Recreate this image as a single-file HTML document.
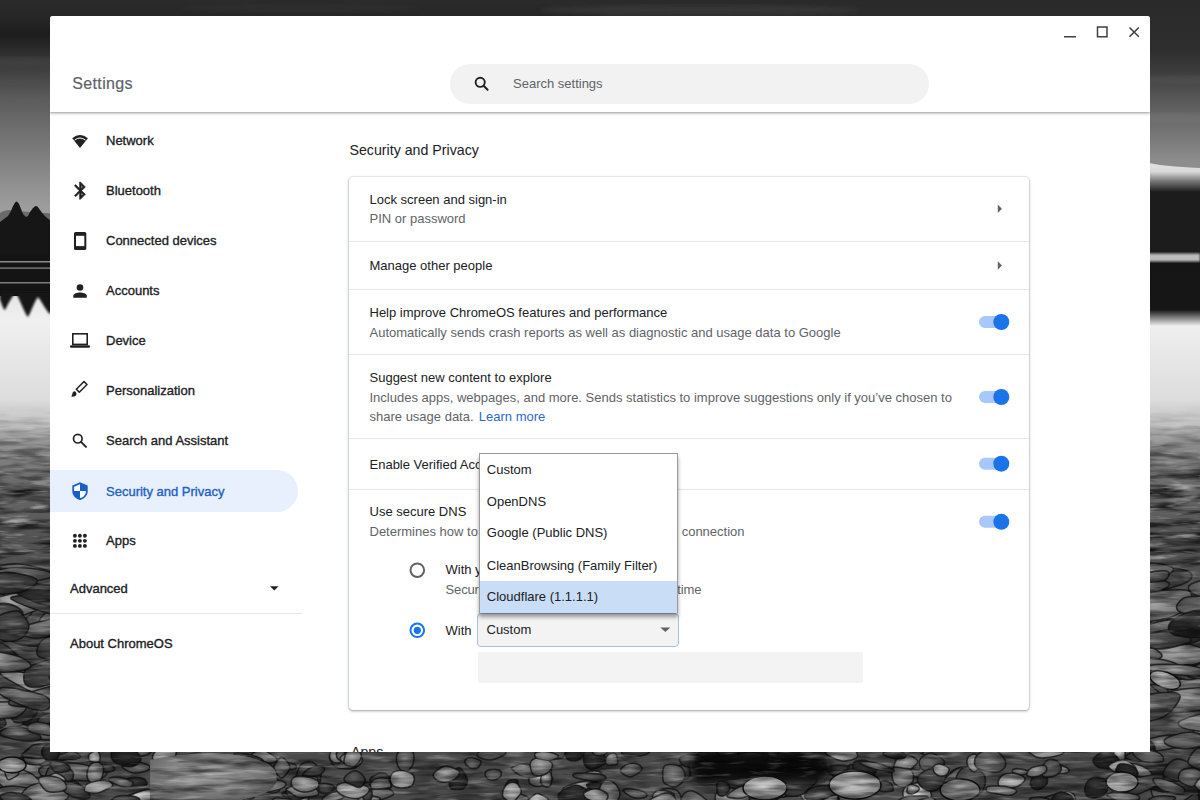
<!DOCTYPE html>
<html><head><meta charset="utf-8">
<style>
*{box-sizing:border-box;margin:0;padding:0}
html,body{width:1200px;height:800px;overflow:hidden;font-family:"Liberation Sans",sans-serif;}
body{position:relative;background:#4a4a4a;}
#bg{position:absolute;left:0;top:0;width:1200px;height:800px}
.win{position:absolute;left:50px;top:16px;width:1100px;height:736px;background:#fff;border-radius:3px 3px 0 0;overflow:hidden}
.pg{position:absolute;left:-50px;top:-16px;width:1200px;height:800px}
.hdr{position:absolute;left:50px;top:16px;width:1100px;height:96px;background:#fff;box-shadow:0 1px 2px rgba(0,0,0,.28),0 2px 3px rgba(0,0,0,.12);z-index:3}
.t{position:absolute;white-space:nowrap;font-size:13px;color:#202124;line-height:16px}
.s{color:#5f6368}
.nav{-webkit-text-stroke:0.35px #202124}
svg.i{position:absolute;left:0;top:0;overflow:visible}
.card{position:absolute;left:349px;top:177px;width:680px;height:533px;border-radius:4px;box-shadow:0 0 0 1px rgba(0,0,0,.06),0 1px 2px rgba(60,64,67,.3),0 1px 3px 1px rgba(60,64,67,.12);background:#fff}
.dv{position:absolute;left:349px;width:680px;height:1px;background:#e6e6e6}
</style></head>
<body>
<svg id="bg" width="1200" height="800" viewBox="0 0 1200 800">
<defs>
<linearGradient id="skyL" x1="0" y1="0" x2="0" y2="216" gradientUnits="userSpaceOnUse">
<stop offset="0" stop-color="#2b2b2b"/><stop offset="0.08" stop-color="#262626"/><stop offset="0.16" stop-color="#1d1d1d"/><stop offset="0.3" stop-color="#3a3a3a"/><stop offset="0.46" stop-color="#5c5c5c"/><stop offset="0.69" stop-color="#7a7a7a"/><stop offset="0.93" stop-color="#9a9a9a"/><stop offset="1" stop-color="#a0a0a0"/>
</linearGradient>
<linearGradient id="skyR" x1="0" y1="0" x2="0" y2="216" gradientUnits="userSpaceOnUse">
<stop offset="0" stop-color="#2a2a2a"/><stop offset="0.23" stop-color="#2e2e2e"/><stop offset="0.33" stop-color="#3c3c3c"/><stop offset="0.47" stop-color="#5a5a5a"/><stop offset="0.74" stop-color="#8c8c8c"/><stop offset="1" stop-color="#989898"/>
</linearGradient>
<linearGradient id="snow" x1="0" y1="163" x2="0" y2="192" gradientUnits="userSpaceOnUse">
<stop offset="0" stop-color="#e2e2e2"/><stop offset="0.3" stop-color="#d8d8d8"/><stop offset="0.65" stop-color="#707070"/><stop offset="1" stop-color="#1c1c1c"/>
</linearGradient>
<linearGradient id="water" x1="0" y1="296" x2="0" y2="800" gradientUnits="userSpaceOnUse">
<stop offset="0" stop-color="#e6e6e6"/><stop offset="0.05" stop-color="#f0f0f0"/><stop offset="0.206" stop-color="#dcdcdc"/><stop offset="0.256" stop-color="#c0c0c0"/><stop offset="0.296" stop-color="#8c8c8c"/><stop offset="0.365" stop-color="#6c6c6c"/><stop offset="0.484" stop-color="#525252"/><stop offset="1" stop-color="#4a4a4a"/>
</linearGradient>
<linearGradient id="reflR" x1="0" y1="261" x2="0" y2="326" gradientUnits="userSpaceOnUse">
<stop offset="0" stop-color="#151515"/><stop offset="0.75" stop-color="#171717"/><stop offset="1" stop-color="#171717" stop-opacity="0"/>
</linearGradient>
<linearGradient id="mk" x1="0" y1="405" x2="0" y2="490" gradientUnits="userSpaceOnUse">
<stop offset="0" stop-color="#fff" stop-opacity="0"/><stop offset="1" stop-color="#fff" stop-opacity="1"/>
</linearGradient>
<mask id="texmask"><rect x="0" y="380" width="1200" height="420" fill="url(#mk)"/></mask>
<radialGradient id="g1" cx="0.45" cy="0.4" r="0.65"><stop offset="0" stop-color="#a8a8a8"/><stop offset="1" stop-color="#5a5a5a"/></radialGradient>
<radialGradient id="g2" cx="0.45" cy="0.4" r="0.65"><stop offset="0" stop-color="#808080"/><stop offset="1" stop-color="#404040"/></radialGradient>
<radialGradient id="g3" cx="0.45" cy="0.4" r="0.65"><stop offset="0" stop-color="#5e5e5e"/><stop offset="1" stop-color="#2a2a2a"/></radialGradient>
<radialGradient id="g4" cx="0.45" cy="0.4" r="0.65"><stop offset="0" stop-color="#3a3a3a"/><stop offset="1" stop-color="#181818"/></radialGradient>
<radialGradient id="g5" cx="0.45" cy="0.4" r="0.65"><stop offset="0" stop-color="#d0d0d0"/><stop offset="1" stop-color="#7a7a7a"/></radialGradient>
<filter id="tex" x="0" y="0" width="100%" height="100%" color-interpolation-filters="sRGB">
<feTurbulence type="fractalNoise" baseFrequency="0.022 0.15" numOctaves="3" seed="4"/>
<feColorMatrix type="matrix" values="0 0 0 0 0  0 0 0 0 0  0 0 0 0 0  2.4 0 0 0 -0.95"/>
</filter>
<filter id="tex2" x="0" y="0" width="100%" height="100%" color-interpolation-filters="sRGB">
<feTurbulence type="fractalNoise" baseFrequency="0.03 0.2" numOctaves="3" seed="9"/>
<feColorMatrix type="matrix" values="0 0 0 0 1  0 0 0 0 1  0 0 0 0 1  2.6 0 0 0 -1.4"/>
</filter>
<filter id="b1"><feGaussianBlur stdDeviation="1"/></filter>
<filter id="b2"><feGaussianBlur stdDeviation="2"/></filter>
<filter id="b4" x="-50%" y="-50%" width="200%" height="200%"><feGaussianBlur stdDeviation="5"/></filter>
</defs>
<rect x="0" y="0" width="600" height="216" fill="url(#skyL)"/>
<rect x="600" y="0" width="600" height="216" fill="url(#skyR)"/>
<ellipse cx="20" cy="62" rx="60" ry="5" fill="#444" opacity="0.6" filter="url(#b2)"/>
<ellipse cx="10" cy="84" rx="40" ry="4" fill="#505050" opacity="0.5" filter="url(#b2)"/>
<ellipse cx="30" cy="104" rx="60" ry="4" fill="#5e5e5e" opacity="0.4" filter="url(#b2)"/>
<ellipse cx="1185" cy="80" rx="50" ry="4" fill="#555" opacity="0.5" filter="url(#b2)"/>
<ellipse cx="1175" cy="118" rx="60" ry="5" fill="#7a7a7a" opacity="0.4" filter="url(#b2)"/>
<ellipse cx="700" cy="10" rx="160" ry="5" fill="#3a3a3a" opacity="0.7" filter="url(#b2)"/>
<ellipse cx="300" cy="8" rx="120" ry="4" fill="#323232" opacity="0.6" filter="url(#b2)"/>
<path d="M0,213 C4,210 10,209 16,211 L60,214 L60,262 L0,262 Z" fill="#6a6a6a"/>
<path d="M0,262 L0,222 L4,219 L8,216 L11,211 L13,206 L15.5,202 L17,201.5 L19,204 L21,209 L23,214 L26,217 L28,216 L30,212 L33,208 L35.5,206 L37.5,206.5 L40,210 L43,214 L47,218 L50,220 L60,224 L60,262 Z" fill="#161616"/>
<path d="M1140,160 L1150,163.3 L1160,165 L1175,166.5 L1190,167.5 L1200,168 L1200,254 L1140,254 Z" fill="url(#snow)"/>
<rect x="0" y="254" width="1200" height="546" fill="url(#water)"/>
<rect x="0" y="254" width="70" height="42" fill="#141414"/>
<path d="M0,292 L0,300 C2,304 3,309 5,310 C8,304 12,296 16,293 C20,300 25,314 28,317 C31,312 35,300 38,297 C42,302 47,312 50,314 C54,308 58,300 60,296 L60,292 Z" fill="#141414" filter="url(#b1)"/>
<rect x="1130" y="254" width="70" height="72" fill="url(#reflR)"/>
<rect x="1140" y="253.5" width="60" height="8" fill="#bcbcbc" filter="url(#b1)"/>
<rect x="0" y="261.2" width="60" height="1.2" fill="#a8a8a8"/>
<rect x="0" y="267.5" width="60" height="1.2" fill="#8a8a8a"/>
<rect x="0" y="282.2" width="60" height="1.2" fill="#9a9a9a"/>
<path d="M53.5,702.0C52.1,704.1 43.4,705.6 36.2,706.3C29.1,706.9 20.1,706.9 10.6,705.9C1.1,705.0 -16.4,702.9 -20.7,700.7C-25.1,698.4 -20.4,694.1 -15.5,692.3C-10.6,690.5 -1.5,689.5 8.5,689.8C18.6,690.0 37.3,691.6 44.8,693.7C52.3,695.7 55.0,699.9 53.5,702.0Z" fill="url(#g1)" stroke="#121212" stroke-opacity="0.75" stroke-width="1.6"/>
<path d="M51.5,762.0C51.5,763.6 48.2,765.2 45.2,766.0C42.2,766.7 37.2,766.6 33.3,766.3C29.4,766.0 23.8,765.6 21.8,764.2C19.7,762.7 18.9,759.1 21.1,757.7C23.3,756.4 31.1,756.2 35.1,755.9C39.1,755.7 42.3,755.2 45.1,756.2C47.8,757.2 51.5,760.3 51.5,762.0Z" fill="url(#g2)" stroke="#121212" stroke-opacity="0.75" stroke-width="1.6"/>
<path d="M54.5,573.3C55.7,574.2 49.9,575.1 43.2,576.6C36.4,578.2 21.6,581.6 14.1,582.5C6.6,583.3 1.4,582.2 -1.7,581.7C-4.7,581.2 -7.8,581.1 -4.1,579.6C-0.4,578.2 13.7,574.6 20.4,573.2C27.1,571.8 30.2,571.3 35.9,571.3C41.6,571.3 53.3,572.4 54.5,573.3Z" fill="url(#g1)" stroke="#121212" stroke-opacity="0.75" stroke-width="1.6"/>
<path d="M87.4,738.5C87.5,739.7 84.7,743.0 81.5,745.0C78.3,746.9 72.0,749.1 68.2,750.0C64.4,750.9 60.7,750.7 58.9,750.1C57.1,749.6 56.6,748.3 57.4,746.7C58.2,745.1 59.6,742.0 63.5,740.5C67.4,739.0 76.9,737.9 80.9,737.6C84.8,737.3 87.3,737.3 87.4,738.5Z" fill="url(#g2)" stroke="#121212" stroke-opacity="0.75" stroke-width="1.6"/>
<path d="M83.2,611.2C83.1,614.5 80.6,622.1 77.2,625.2C73.9,628.3 68.4,628.8 63.2,629.8C58.0,630.9 49.8,633.0 45.8,631.4C41.9,629.9 38.1,624.3 39.4,620.4C40.7,616.5 47.0,610.8 53.4,608.3C59.8,605.8 72.7,604.8 77.7,605.3C82.7,605.8 83.3,607.9 83.2,611.2Z" fill="url(#g1)" stroke="#121212" stroke-opacity="0.75" stroke-width="1.6"/>
<path d="M46.0,773.5C45.3,775.3 43.4,777.6 39.7,777.9C36.0,778.1 27.6,776.4 23.7,775.0C19.7,773.5 17.3,770.8 15.9,769.0C14.6,767.2 13.7,765.4 15.7,764.2C17.8,763.1 23.6,761.4 28.2,761.9C32.9,762.3 40.6,765.0 43.6,766.9C46.5,768.8 46.6,771.6 46.0,773.5Z" fill="url(#g1)" stroke="#121212" stroke-opacity="0.75" stroke-width="1.6"/>
<path d="M39.6,785.6C38.3,788.6 29.4,791.8 23.8,792.4C18.2,793.0 10.8,791.8 6.0,789.2C1.3,786.6 -2.5,780.8 -4.7,777.0C-6.9,773.2 -9.4,768.3 -7.2,766.5C-4.9,764.7 2.2,765.0 8.8,766.3C15.3,767.5 26.9,770.9 32.1,774.1C37.2,777.3 41.0,782.5 39.6,785.6Z" fill="url(#g1)" stroke="#121212" stroke-opacity="0.75" stroke-width="1.6"/>
<path d="M19.6,660.8C19.1,664.9 6.4,667.2 -0.8,668.0C-8.0,668.8 -15.8,667.3 -23.5,665.7C-31.2,664.0 -43.5,661.3 -47.0,658.1C-50.6,654.8 -48.5,649.1 -44.7,646.1C-40.8,643.1 -31.6,640.7 -23.7,640.2C-15.9,639.7 -4.9,639.8 2.3,643.3C9.5,646.7 20.2,656.7 19.6,660.8Z" fill="url(#g3)" stroke="#121212" stroke-opacity="0.75" stroke-width="1.6"/>
<path d="M46.2,592.2C45.6,595.0 33.4,596.0 25.4,595.1C17.4,594.2 6.9,590.8 -1.8,586.8C-10.5,582.9 -23.7,574.7 -26.6,571.3C-29.6,567.9 -24.8,566.8 -19.6,566.5C-14.4,566.2 -3.6,567.3 4.5,569.3C12.7,571.3 22.1,574.7 29.1,578.5C36.0,582.3 46.8,589.5 46.2,592.2Z" fill="url(#g2)" stroke="#121212" stroke-opacity="0.75" stroke-width="1.6"/>
<path d="M106.7,774.0C106.1,776.2 99.8,779.8 93.7,780.8C87.5,781.8 78.1,780.5 69.8,779.9C61.6,779.3 49.0,779.2 44.2,777.1C39.3,775.0 36.6,769.9 40.9,767.5C45.2,765.1 60.4,762.9 69.7,763.0C79.1,763.0 90.9,765.8 97.1,767.7C103.2,769.5 107.2,771.9 106.7,774.0Z" fill="url(#g2)" stroke="#121212" stroke-opacity="0.75" stroke-width="1.6"/>
<path d="M8.3,719.5C6.7,721.9 1.2,721.9 -4.2,721.9C-9.5,722.0 -17.2,722.5 -23.8,719.7C-30.4,716.9 -41.5,708.6 -43.8,705.2C-46.2,701.8 -42.1,700.0 -38.0,699.2C-33.8,698.4 -26.2,699.1 -19.0,700.5C-11.7,701.9 1.0,704.4 5.6,707.6C10.1,710.8 9.9,717.1 8.3,719.5Z" fill="url(#g2)" stroke="#121212" stroke-opacity="0.75" stroke-width="1.6"/>
<path d="M100.3,733.3C100.6,734.7 92.9,736.1 84.1,737.2C75.3,738.3 58.0,740.1 47.7,740.1C37.3,740.0 26.6,738.0 22.0,736.8C17.5,735.5 16.0,733.9 20.2,732.5C24.4,731.1 36.6,728.8 47.0,728.2C57.3,727.6 73.4,727.9 82.3,728.8C91.2,729.6 100.0,731.9 100.3,733.3Z" fill="url(#g2)" stroke="#121212" stroke-opacity="0.75" stroke-width="1.6"/>
<path d="M30.6,713.3C32.7,715.1 34.6,718.3 30.1,721.2C25.6,724.0 11.9,729.0 3.6,730.4C-4.7,731.8 -16.4,731.5 -19.9,729.5C-23.5,727.5 -20.2,721.3 -17.6,718.5C-14.9,715.6 -9.7,713.8 -3.9,712.4C1.9,711.0 11.6,709.9 17.3,710.0C23.1,710.2 28.5,711.4 30.6,713.3Z" fill="url(#g2)" stroke="#121212" stroke-opacity="0.75" stroke-width="1.6"/>
<path d="M41.1,737.2C41.9,739.2 38.3,741.1 33.8,741.4C29.2,741.7 19.4,740.2 13.9,739.2C8.4,738.1 2.4,736.8 0.7,735.2C-1.1,733.5 1.3,730.9 3.4,729.5C5.6,728.0 9.3,726.3 13.5,726.3C17.7,726.3 24.3,727.7 28.9,729.5C33.5,731.4 40.3,735.3 41.1,737.2Z" fill="url(#g3)" stroke="#121212" stroke-opacity="0.75" stroke-width="1.6"/>
<path d="M74.1,698.8C73.2,700.4 63.6,699.7 56.6,698.5C49.5,697.3 41.1,695.7 31.8,691.8C22.6,687.8 5.3,678.2 1.3,674.8C-2.7,671.4 3.0,671.2 7.8,671.2C12.6,671.1 21.2,671.6 30.3,674.5C39.4,677.5 54.9,685.0 62.2,689.1C69.5,693.1 75.0,697.2 74.1,698.8Z" fill="url(#g1)" stroke="#121212" stroke-opacity="0.75" stroke-width="1.6"/>
<path d="M0.3,663.7C1.2,666.8 3.5,671.2 -1.2,674.6C-5.8,678.1 -19.8,683.0 -27.8,684.6C-35.8,686.2 -45.8,685.9 -49.2,684.3C-52.5,682.7 -50.7,678.6 -47.9,674.9C-45.2,671.2 -39.6,665.1 -32.6,662.1C-25.7,659.0 -11.7,656.2 -6.3,656.5C-0.8,656.8 -0.5,660.7 0.3,663.7Z" fill="url(#g1)" stroke="#121212" stroke-opacity="0.75" stroke-width="1.6"/>
<path d="M77.3,666.2C78.1,669.2 75.1,671.9 69.2,675.3C63.3,678.7 49.0,685.0 41.7,686.6C34.4,688.1 28.3,687.4 25.6,684.5C23.0,681.5 23.1,672.9 25.9,669.1C28.7,665.3 36.0,663.5 42.4,661.6C48.8,659.7 58.7,656.9 64.5,657.7C70.3,658.4 76.5,663.3 77.3,666.2Z" fill="url(#g3)" stroke="#121212" stroke-opacity="0.75" stroke-width="1.6"/>
<path d="M65.0,581.9C64.4,584.1 70.0,589.4 62.9,589.8C55.9,590.2 33.3,587.2 22.7,584.2C12.1,581.2 3.0,574.9 -0.9,571.8C-4.7,568.8 -4.6,567.3 -0.6,566.1C3.5,564.8 12.3,562.6 23.5,564.4C34.7,566.2 60.0,573.7 66.9,576.7C73.8,579.6 65.7,579.8 65.0,581.9Z" fill="url(#g3)" stroke="#121212" stroke-opacity="0.75" stroke-width="1.6"/>
<path d="M46.0,597.2C45.5,598.2 46.4,599.9 41.7,600.0C37.0,600.1 24.3,598.9 17.8,597.8C11.4,596.8 5.9,595.2 3.1,593.8C0.4,592.4 -1.6,590.0 1.4,589.3C4.4,588.6 14.1,588.9 21.3,589.7C28.4,590.5 40.3,592.7 44.4,594.0C48.5,595.3 46.4,596.2 46.0,597.2Z" fill="url(#g1)" stroke="#121212" stroke-opacity="0.75" stroke-width="1.6"/>
<path d="M5.8,724.9C4.4,727.9 -4.6,729.7 -12.3,729.1C-20.1,728.5 -32.1,724.4 -40.5,721.2C-49.0,718.1 -61.4,713.4 -63.2,710.4C-65.0,707.5 -56.1,705.1 -51.6,703.6C-47.1,702.2 -43.9,700.4 -35.9,701.6C-28.0,702.9 -11.1,707.1 -4.1,711.0C2.8,714.9 7.2,721.8 5.8,724.9Z" fill="url(#g3)" stroke="#121212" stroke-opacity="0.75" stroke-width="1.6"/>
<path d="M83.8,595.0C84.8,597.6 83.4,601.0 79.4,603.4C75.4,605.9 65.1,608.9 59.8,609.8C54.5,610.8 49.9,610.7 47.6,609.2C45.4,607.6 44.9,603.3 46.6,600.4C48.2,597.6 53.1,594.1 57.6,592.1C62.1,590.0 69.2,587.7 73.6,588.2C77.9,588.7 82.8,592.5 83.8,595.0Z" fill="url(#g2)" stroke="#121212" stroke-opacity="0.75" stroke-width="1.6"/>
<path d="M80.4,756.4C80.6,757.8 78.2,758.9 73.9,759.5C69.7,760.0 61.8,760.6 55.0,759.8C48.1,759.1 36.6,756.4 32.6,754.9C28.7,753.4 28.6,751.6 31.4,750.7C34.2,749.8 42.5,749.3 49.4,749.4C56.2,749.5 67.4,750.1 72.6,751.3C77.8,752.4 80.2,755.1 80.4,756.4Z" fill="url(#g3)" stroke="#121212" stroke-opacity="0.75" stroke-width="1.6"/>
<path d="M31.8,612.9C32.1,614.8 25.7,618.3 21.5,620.6C17.3,622.8 12.4,625.0 6.8,626.2C1.1,627.4 -8.9,629.1 -12.4,627.8C-15.9,626.5 -16.9,621.2 -14.2,618.4C-11.5,615.5 -2.0,612.5 3.7,610.9C9.4,609.4 15.2,608.8 19.9,609.1C24.6,609.5 31.6,611.0 31.8,612.9Z" fill="url(#g2)" stroke="#121212" stroke-opacity="0.75" stroke-width="1.6"/>
<path d="M54.7,802.6C54.9,805.3 47.5,807.6 40.1,807.7C32.8,807.8 18.5,805.5 10.5,803.1C2.5,800.8 -6.0,796.1 -7.9,793.6C-9.7,791.1 -4.4,789.3 -0.6,788.1C3.2,786.9 8.4,785.7 15.0,786.3C21.6,786.8 32.1,788.6 38.7,791.3C45.3,794.0 54.5,799.8 54.7,802.6Z" fill="url(#g1)" stroke="#121212" stroke-opacity="0.75" stroke-width="1.6"/>
<path d="M54.4,711.1C55.2,714.5 56.2,718.7 52.9,721.3C49.5,723.8 39.6,726.0 34.6,726.3C29.5,726.5 24.6,725.7 22.4,722.9C20.2,720.2 20.3,713.1 21.4,709.7C22.6,706.2 24.7,703.9 29.1,702.5C33.5,701.0 43.5,699.5 47.7,701.0C51.9,702.4 53.5,707.7 54.4,711.1Z" fill="url(#g4)" stroke="#121212" stroke-opacity="0.75" stroke-width="1.6"/>
<path d="M66.5,717.2C67.1,718.8 64.0,722.2 60.7,723.7C57.3,725.2 50.0,726.0 46.3,726.1C42.6,726.2 39.5,725.5 38.4,724.1C37.2,722.6 37.8,719.2 39.5,717.5C41.2,715.7 45.7,714.3 48.7,713.7C51.6,713.1 54.2,713.3 57.2,713.9C60.1,714.5 66.0,715.6 66.5,717.2Z" fill="url(#g3)" stroke="#121212" stroke-opacity="0.75" stroke-width="1.6"/>
<path d="M37.6,709.9C37.6,712.7 34.5,717.5 30.8,719.6C27.1,721.7 19.0,723.5 15.5,722.5C12.0,721.6 11.0,717.0 9.9,713.9C8.8,710.7 7.0,706.1 8.6,703.6C10.3,701.1 16.0,698.8 19.7,698.7C23.4,698.7 28.0,701.3 31.0,703.1C34.0,705.0 37.7,707.2 37.6,709.9Z" fill="url(#g3)" stroke="#121212" stroke-opacity="0.75" stroke-width="1.6"/>
<path d="M30.6,667.0C29.1,669.3 19.4,671.1 13.2,671.8C6.9,672.4 -0.6,672.9 -6.6,670.9C-12.7,668.8 -21.0,663.0 -23.3,659.5C-25.6,656.0 -24.3,651.0 -20.3,649.8C-16.3,648.6 -6.7,651.0 0.5,652.3C7.6,653.7 17.6,655.7 22.7,658.1C27.7,660.6 32.2,664.7 30.6,667.0Z" fill="url(#g1)" stroke="#121212" stroke-opacity="0.75" stroke-width="1.6"/>
<path d="M19.5,585.5C18.6,587.0 11.7,587.9 5.3,588.1C-1.1,588.4 -13.0,587.8 -18.8,586.9C-24.6,585.9 -27.0,584.1 -29.5,582.5C-32.0,580.9 -36.5,578.4 -33.9,577.3C-31.2,576.2 -21.0,575.8 -13.5,576.1C-6.1,576.5 5.3,577.6 10.9,579.2C16.4,580.8 20.4,584.0 19.5,585.5Z" fill="url(#g2)" stroke="#121212" stroke-opacity="0.75" stroke-width="1.6"/>
<path d="M27.1,704.8C28.2,707.3 23.1,714.4 17.0,716.7C10.9,719.0 -2.9,718.3 -9.7,718.6C-16.5,719.0 -20.2,719.9 -23.8,718.7C-27.5,717.4 -33.3,713.7 -31.8,711.2C-30.2,708.7 -21.5,705.4 -14.4,703.8C-7.3,702.2 3.8,701.5 10.7,701.6C17.6,701.8 26.1,702.3 27.1,704.8Z" fill="url(#g1)" stroke="#121212" stroke-opacity="0.75" stroke-width="1.6"/>
<path d="M66.1,691.5C66.6,694.0 63.6,698.3 58.6,700.8C53.6,703.3 44.1,705.7 36.2,706.5C28.4,707.3 15.5,706.7 11.4,705.5C7.3,704.2 8.0,701.3 11.6,699.0C15.2,696.7 25.6,693.7 32.9,691.4C40.3,689.2 50.5,685.7 56.0,685.7C61.5,685.7 65.7,689.0 66.1,691.5Z" fill="url(#g2)" stroke="#121212" stroke-opacity="0.75" stroke-width="1.6"/>
<path d="M69.2,639.1C70.0,641.4 60.3,643.6 52.7,644.7C45.1,645.7 31.7,646.7 23.6,645.4C15.6,644.2 6.5,639.8 4.2,637.2C1.9,634.6 6.8,631.9 9.8,630.0C12.8,628.1 15.9,625.8 22.3,625.9C28.7,626.0 40.3,628.4 48.1,630.5C56.0,632.7 68.5,636.7 69.2,639.1Z" fill="url(#g3)" stroke="#121212" stroke-opacity="0.75" stroke-width="1.6"/>
<path d="M65.1,733.5C64.8,734.9 63.9,736.2 59.2,736.2C54.5,736.2 42.2,734.9 36.9,733.8C31.7,732.7 28.8,731.3 27.7,729.6C26.6,727.9 28.4,725.0 30.3,723.7C32.2,722.5 34.0,721.5 39.1,722.2C44.3,722.9 56.9,726.0 61.2,727.9C65.5,729.8 65.5,732.1 65.1,733.5Z" fill="url(#g2)" stroke="#121212" stroke-opacity="0.75" stroke-width="1.6"/>
<path d="M-5.4,764.2C-6.2,767.4 -9.9,771.5 -13.4,772.3C-16.9,773.2 -22.2,771.1 -26.2,769.3C-30.2,767.5 -36.5,763.9 -37.3,761.5C-38.2,759.2 -34.1,757.1 -31.6,755.0C-29.0,753.0 -25.9,749.4 -22.0,749.1C-18.2,748.7 -11.1,750.6 -8.3,753.1C-5.6,755.6 -4.5,761.0 -5.4,764.2Z" fill="url(#g4)" stroke="#121212" stroke-opacity="0.75" stroke-width="1.6"/>
<path d="M50.9,750.3C51.6,752.8 51.0,756.5 48.7,758.9C46.5,761.3 41.2,764.2 37.4,764.8C33.5,765.4 27.8,764.3 25.6,762.4C23.3,760.5 22.4,756.3 23.9,753.4C25.4,750.6 31.1,746.8 34.5,745.3C38.0,743.8 41.9,743.6 44.6,744.5C47.4,745.3 50.2,747.9 50.9,750.3Z" fill="url(#g1)" stroke="#121212" stroke-opacity="0.75" stroke-width="1.6"/>
<path d="M71.1,643.3C71.6,646.1 70.0,650.3 66.7,653.0C63.4,655.6 56.2,658.6 51.4,659.1C46.6,659.6 40.0,658.1 37.8,655.7C35.7,653.3 37.1,647.7 38.7,644.6C40.4,641.5 43.4,638.5 47.7,637.1C51.9,635.7 60.3,635.1 64.2,636.1C68.1,637.2 70.7,640.5 71.1,643.3Z" fill="url(#g3)" stroke="#121212" stroke-opacity="0.75" stroke-width="1.6"/>
<path d="M45.7,595.6C47.0,598.9 47.2,604.0 41.2,607.7C35.3,611.5 18.2,617.0 10.0,618.1C1.7,619.2 -3.8,617.2 -8.4,614.6C-12.9,612.0 -20.0,605.9 -17.1,602.6C-14.3,599.2 0.2,596.9 8.6,594.5C17.0,592.1 27.0,587.8 33.1,588.0C39.3,588.2 44.4,592.3 45.7,595.6Z" fill="url(#g1)" stroke="#121212" stroke-opacity="0.75" stroke-width="1.6"/>
<path d="M23.0,614.0C23.1,616.6 21.3,620.1 16.9,621.9C12.4,623.7 2.3,625.0 -3.9,624.8C-10.0,624.6 -18.2,622.9 -20.2,620.8C-22.3,618.6 -19.7,614.6 -16.2,611.8C-12.7,608.9 -4.6,604.4 0.8,603.5C6.1,602.6 12.3,604.7 16.0,606.5C19.7,608.2 22.8,611.5 23.0,614.0Z" fill="url(#g3)" stroke="#121212" stroke-opacity="0.75" stroke-width="1.6"/>
<path d="M90.9,686.8C90.1,688.4 84.3,689.2 80.4,689.4C76.6,689.7 73.0,690.0 67.9,688.2C62.7,686.4 51.3,681.1 49.4,678.7C47.4,676.3 53.2,674.9 55.9,674.1C58.7,673.3 61.0,672.8 65.8,673.8C70.7,674.7 80.8,677.5 84.9,679.6C89.1,681.8 91.6,685.1 90.9,686.8Z" fill="url(#g2)" stroke="#121212" stroke-opacity="0.75" stroke-width="1.6"/>
<path d="M87.3,608.6C88.0,611.1 84.9,614.3 78.4,615.1C71.9,615.9 59.3,615.9 48.3,613.4C37.3,610.9 17.2,602.9 12.4,599.9C7.7,597.0 13.9,596.4 19.9,595.6C25.8,594.7 39.1,594.0 48.2,594.8C57.2,595.5 67.6,597.5 74.1,599.8C80.7,602.1 86.6,606.0 87.3,608.6Z" fill="url(#g3)" stroke="#121212" stroke-opacity="0.75" stroke-width="1.6"/>
<path d="M108.9,701.1C109.4,703.1 103.5,707.7 96.0,709.6C88.4,711.6 73.0,712.8 63.6,712.7C54.2,712.7 42.9,710.7 39.4,709.2C35.9,707.8 39.1,705.8 42.5,703.9C45.9,701.9 51.1,698.4 59.5,697.4C67.9,696.3 84.7,697.0 92.9,697.6C101.1,698.3 108.4,699.1 108.9,701.1Z" fill="url(#g4)" stroke="#121212" stroke-opacity="0.75" stroke-width="1.6"/>
<path d="M68.3,600.2C66.8,603.0 58.0,605.8 52.8,606.2C47.6,606.7 43.2,605.2 37.2,602.9C31.1,600.6 19.0,596.0 16.6,592.6C14.3,589.3 18.5,584.3 22.9,583.0C27.3,581.6 36.5,583.6 43.1,584.6C49.6,585.6 57.8,586.5 62.1,589.1C66.3,591.7 69.9,597.3 68.3,600.2Z" fill="url(#g4)" stroke="#121212" stroke-opacity="0.75" stroke-width="1.6"/>
<path d="M78.6,783.5C79.0,785.6 71.9,790.1 65.6,792.5C59.3,794.9 48.0,797.2 40.9,797.9C33.9,798.7 26.4,797.8 23.3,797.1C20.3,796.3 19.3,795.7 22.4,793.3C25.5,791.0 35.0,785.2 41.8,782.9C48.6,780.7 57.2,779.9 63.3,780.0C69.5,780.1 78.2,781.4 78.6,783.5Z" fill="url(#g2)" stroke="#121212" stroke-opacity="0.75" stroke-width="1.6"/>
<path d="M72.7,702.9C73.1,704.4 71.1,707.6 68.7,709.1C66.2,710.5 62.0,710.7 58.0,711.4C54.0,712.1 47.6,713.8 44.8,713.2C41.9,712.7 39.4,710.1 40.8,708.1C42.3,706.1 49.1,702.8 53.4,701.5C57.7,700.1 63.3,699.8 66.5,700.0C69.8,700.2 72.4,701.4 72.7,702.9Z" fill="url(#g2)" stroke="#121212" stroke-opacity="0.75" stroke-width="1.6"/>
<path d="M84.9,619.7C86.1,621.4 86.3,623.9 78.9,626.9C71.6,629.9 50.0,636.3 40.8,637.8C31.5,639.3 27.5,637.1 23.3,635.8C19.1,634.4 12.0,632.1 15.4,629.6C18.9,627.1 34.6,622.8 44.0,620.6C53.4,618.4 65.1,616.6 71.9,616.5C78.7,616.3 83.8,618.0 84.9,619.7Z" fill="url(#g2)" stroke="#121212" stroke-opacity="0.75" stroke-width="1.6"/>
<path d="M68.3,792.5C69.5,795.8 68.8,797.7 64.2,800.9C59.6,804.1 48.0,810.2 40.7,811.7C33.4,813.2 23.7,812.3 20.3,809.9C16.8,807.5 18.3,801.3 20.1,797.2C21.8,793.2 24.5,788.2 30.7,785.5C36.9,782.8 51.0,779.9 57.3,781.1C63.5,782.3 67.1,789.2 68.3,792.5Z" fill="url(#g1)" stroke="#121212" stroke-opacity="0.75" stroke-width="1.6"/>
<path d="M49.6,707.3C48.1,709.6 42.9,710.7 37.2,710.0C31.6,709.2 22.1,705.5 15.7,702.7C9.3,699.9 1.1,695.7 -1.0,693.2C-3.2,690.6 -0.9,687.9 2.8,687.3C6.4,686.7 13.8,688.1 21.0,689.6C28.2,691.2 41.2,693.4 46.0,696.4C50.7,699.3 51.0,705.1 49.6,707.3Z" fill="url(#g2)" stroke="#121212" stroke-opacity="0.75" stroke-width="1.6"/>
<path d="M92.2,720.2C93.1,723.4 88.3,725.9 84.4,728.2C80.5,730.4 74.2,733.4 68.8,733.6C63.4,733.8 55.0,731.8 52.0,729.4C49.1,727.0 49.7,722.4 51.0,719.0C52.3,715.6 54.9,710.7 59.6,709.0C64.2,707.3 73.5,707.0 78.9,708.9C84.4,710.8 91.3,717.0 92.2,720.2Z" fill="url(#g3)" stroke="#121212" stroke-opacity="0.75" stroke-width="1.6"/>
<path d="M69.9,749.7C70.2,751.5 66.0,753.0 60.6,754.5C55.3,756.0 44.3,758.3 37.8,758.5C31.3,758.8 23.2,757.4 21.6,755.9C20.0,754.4 26.0,751.5 28.2,749.7C30.4,747.8 29.7,745.6 34.8,744.6C39.9,743.7 52.9,743.0 58.8,743.8C64.6,744.7 69.6,747.9 69.9,749.7Z" fill="url(#g3)" stroke="#121212" stroke-opacity="0.75" stroke-width="1.6"/>
<path d="M53.7,574.1C55.0,576.0 46.8,578.9 40.0,580.3C33.2,581.7 22.5,582.4 12.8,582.4C3.1,582.5 -13.6,582.0 -18.1,580.6C-22.5,579.3 -18.4,576.4 -13.9,574.3C-9.5,572.1 0.8,568.9 8.4,568.0C16.1,567.0 24.5,567.5 32.0,568.5C39.6,569.6 52.4,572.1 53.7,574.1Z" fill="url(#g2)" stroke="#121212" stroke-opacity="0.75" stroke-width="1.6"/>
<path d="M28.9,625.7C29.1,629.9 26.1,635.3 22.1,637.9C18.1,640.5 9.4,642.2 5.0,641.3C0.7,640.4 -2.4,636.6 -3.8,632.6C-5.1,628.7 -5.8,621.3 -3.0,617.8C-0.3,614.2 8.5,612.0 12.5,611.2C16.5,610.4 18.1,610.4 20.8,612.8C23.5,615.2 28.7,621.5 28.9,625.7Z" fill="url(#g3)" stroke="#121212" stroke-opacity="0.75" stroke-width="1.6"/>
<path d="M37.2,580.0C38.3,582.7 32.4,587.8 26.2,590.2C20.1,592.7 10.1,594.1 0.3,594.4C-9.6,594.8 -28.8,594.4 -32.7,592.2C-36.5,590.0 -28.3,584.7 -22.9,581.5C-17.5,578.2 -7.2,574.2 -0.2,572.9C6.8,571.6 12.9,572.5 19.1,573.7C25.4,574.9 36.0,577.2 37.2,580.0Z" fill="url(#g3)" stroke="#121212" stroke-opacity="0.75" stroke-width="1.6"/>
<path d="M73.0,777.9C72.1,780.5 68.3,783.5 65.9,785.4C63.5,787.3 62.0,789.6 58.7,789.1C55.3,788.7 47.5,786.1 45.7,782.8C43.8,779.5 46.1,772.3 47.7,769.4C49.2,766.5 51.2,765.1 55.1,765.2C59.0,765.3 68.1,767.8 71.1,769.9C74.1,772.0 73.9,775.3 73.0,777.9Z" fill="url(#g3)" stroke="#121212" stroke-opacity="0.75" stroke-width="1.6"/>
<path d="M-2.2,616.9C-1.3,619.1 -0.3,622.6 -3.9,624.8C-7.6,626.9 -17.7,628.7 -24.2,629.7C-30.7,630.7 -40.7,632.4 -43.0,630.8C-45.3,629.3 -40.3,622.9 -38.0,620.3C-35.8,617.8 -34.2,616.9 -29.3,615.4C-24.5,614.0 -13.7,611.5 -9.2,611.7C-4.6,612.0 -3.1,614.8 -2.2,616.9Z" fill="url(#g1)" stroke="#121212" stroke-opacity="0.75" stroke-width="1.6"/>
<path d="M-4.5,781.0C-4.6,783.2 -7.7,786.0 -11.5,787.2C-15.2,788.5 -23.0,788.9 -27.1,788.5C-31.2,788.1 -34.1,786.8 -36.1,784.9C-38.1,782.9 -41.3,778.5 -38.9,776.6C-36.6,774.7 -26.6,773.8 -21.9,773.3C-17.3,772.9 -13.9,772.4 -11.0,773.7C-8.1,775.0 -4.4,778.7 -4.5,781.0Z" fill="url(#g3)" stroke="#121212" stroke-opacity="0.75" stroke-width="1.6"/>
<path d="M1191.4,785.9C1191.5,787.5 1189.4,789.0 1183.4,789.6C1177.3,790.1 1162.8,790.4 1155.2,789.2C1147.6,788.1 1139.9,784.6 1137.7,782.7C1135.4,780.9 1137.2,779.1 1141.5,778.2C1145.7,777.4 1156.5,777.6 1163.4,777.8C1170.2,778.1 1178.0,778.5 1182.7,779.9C1187.4,781.2 1191.3,784.3 1191.4,785.9Z" fill="url(#g2)" stroke="#121212" stroke-opacity="0.75" stroke-width="1.6"/>
<path d="M1211.4,630.2C1211.6,632.8 1213.7,636.2 1208.6,637.6C1203.5,638.9 1189.9,639.4 1180.8,638.2C1171.7,637.1 1158.6,633.1 1154.1,630.7C1149.6,628.2 1149.5,625.2 1153.7,623.3C1158.0,621.5 1170.6,619.6 1179.6,619.3C1188.5,619.1 1202.1,620.1 1207.4,621.9C1212.7,623.7 1211.2,627.6 1211.4,630.2Z" fill="url(#g3)" stroke="#121212" stroke-opacity="0.75" stroke-width="1.6"/>
<path d="M1145.3,597.5C1145.3,600.3 1144.0,603.4 1140.1,604.8C1136.1,606.2 1126.5,606.8 1121.7,605.9C1116.9,605.0 1113.3,602.1 1111.3,599.5C1109.2,596.8 1107.2,592.1 1109.3,589.9C1111.4,587.7 1118.8,586.6 1123.9,586.3C1129.0,586.0 1136.2,586.2 1139.7,588.1C1143.3,589.9 1145.2,594.7 1145.3,597.5Z" fill="url(#g3)" stroke="#121212" stroke-opacity="0.75" stroke-width="1.6"/>
<path d="M1228.5,746.4C1228.4,748.6 1224.4,752.6 1221.1,754.7C1217.9,756.8 1212.3,759.1 1208.8,759.2C1205.4,759.2 1202.3,756.4 1200.4,754.9C1198.6,753.5 1196.8,752.4 1197.5,750.7C1198.3,749.0 1200.9,746.4 1204.9,745.0C1209.0,743.5 1217.8,741.6 1221.7,741.8C1225.6,742.1 1228.5,744.3 1228.5,746.4Z" fill="url(#g1)" stroke="#121212" stroke-opacity="0.75" stroke-width="1.6"/>
<path d="M1255.5,722.5C1256.7,726.6 1257.1,732.5 1251.8,735.5C1246.5,738.4 1233.2,740.1 1223.9,740.0C1214.6,739.8 1200.5,736.7 1196.0,734.6C1191.6,732.4 1193.2,730.2 1197.3,727.1C1201.5,723.9 1213.2,718.1 1221.0,715.5C1228.9,712.9 1238.8,710.2 1244.5,711.4C1250.2,712.6 1254.3,718.5 1255.5,722.5Z" fill="url(#g1)" stroke="#121212" stroke-opacity="0.75" stroke-width="1.6"/>
<path d="M1245.0,712.6C1244.5,714.5 1242.3,716.7 1234.9,716.4C1227.6,716.2 1209.1,713.5 1200.8,711.1C1192.4,708.7 1187.8,704.9 1184.8,701.9C1181.9,699.0 1179.0,694.5 1183.1,693.5C1187.3,692.5 1200.5,694.1 1209.6,696.1C1218.6,698.1 1231.6,702.7 1237.5,705.5C1243.4,708.3 1245.4,710.8 1245.0,712.6Z" fill="url(#g2)" stroke="#121212" stroke-opacity="0.75" stroke-width="1.6"/>
<path d="M1196.5,700.1C1195.7,701.0 1195.9,703.1 1190.6,702.3C1185.4,701.6 1170.8,697.5 1165.2,695.5C1159.5,693.5 1158.9,692.2 1156.6,690.3C1154.3,688.5 1148.8,685.0 1151.1,684.5C1153.5,684.0 1163.2,685.4 1170.6,687.4C1178.0,689.4 1191.3,694.5 1195.7,696.6C1200.0,698.7 1197.4,699.1 1196.5,700.1Z" fill="url(#g3)" stroke="#121212" stroke-opacity="0.75" stroke-width="1.6"/>
<path d="M1148.8,641.9C1149.0,643.6 1145.3,646.3 1141.5,647.8C1137.6,649.4 1130.8,650.8 1125.6,651.1C1120.4,651.4 1113.6,650.8 1110.3,649.6C1107.0,648.4 1103.5,646.0 1105.6,644.0C1107.7,642.0 1117.1,638.9 1122.9,637.8C1128.7,636.7 1136.1,636.9 1140.4,637.5C1144.8,638.2 1148.6,640.1 1148.8,641.9Z" fill="url(#g3)" stroke="#121212" stroke-opacity="0.75" stroke-width="1.6"/>
<path d="M1212.7,654.7C1213.2,657.8 1203.5,661.7 1196.0,663.9C1188.5,666.1 1175.5,667.8 1167.6,667.7C1159.8,667.7 1153.4,666.2 1148.8,663.5C1144.2,660.9 1137.1,655.3 1140.2,651.8C1143.4,648.3 1158.9,643.7 1167.7,642.6C1176.5,641.5 1185.7,643.2 1193.2,645.2C1200.7,647.2 1212.2,651.5 1212.7,654.7Z" fill="url(#g1)" stroke="#121212" stroke-opacity="0.75" stroke-width="1.6"/>
<path d="M1248.3,628.2C1246.5,630.9 1238.7,632.3 1232.6,632.7C1226.5,633.1 1218.1,633.3 1211.7,630.5C1205.2,627.7 1196.0,619.7 1194.1,616.0C1192.1,612.2 1194.9,609.1 1199.8,607.8C1204.6,606.4 1215.7,606.5 1223.1,607.9C1230.4,609.3 1239.5,613.0 1243.7,616.4C1247.9,619.7 1250.2,625.5 1248.3,628.2Z" fill="url(#g1)" stroke="#121212" stroke-opacity="0.75" stroke-width="1.6"/>
<path d="M1232.6,690.4C1232.4,694.0 1221.3,697.4 1214.9,699.6C1208.5,701.8 1201.2,703.8 1194.5,703.6C1187.8,703.4 1178.9,701.3 1174.6,698.4C1170.3,695.5 1165.5,690.1 1168.7,686.2C1171.8,682.4 1185.6,676.8 1193.5,675.5C1201.5,674.1 1209.8,675.9 1216.3,678.4C1222.8,680.9 1232.8,686.9 1232.6,690.4Z" fill="url(#g2)" stroke="#121212" stroke-opacity="0.75" stroke-width="1.6"/>
<path d="M1161.6,654.3C1163.1,656.9 1160.1,659.4 1154.0,660.1C1147.9,660.8 1133.8,660.2 1125.0,658.6C1116.2,657.0 1106.8,653.1 1101.4,650.6C1096.0,648.1 1089.2,644.9 1092.8,643.5C1096.4,642.1 1114.2,642.1 1122.9,642.3C1131.7,642.5 1138.8,642.6 1145.2,644.6C1151.7,646.6 1160.1,651.7 1161.6,654.3Z" fill="url(#g1)" stroke="#121212" stroke-opacity="0.75" stroke-width="1.6"/>
<path d="M1199.2,787.1C1199.5,790.0 1193.1,794.5 1188.5,797.7C1183.8,800.9 1176.8,805.8 1171.5,806.2C1166.3,806.7 1160.3,803.1 1156.9,800.4C1153.5,797.7 1150.4,793.1 1151.4,789.9C1152.4,786.8 1157.0,783.0 1162.8,781.4C1168.6,779.7 1180.4,779.1 1186.5,780.1C1192.5,781.0 1198.9,784.1 1199.2,787.1Z" fill="url(#g2)" stroke="#121212" stroke-opacity="0.75" stroke-width="1.6"/>
<path d="M1227.3,694.1C1227.0,697.3 1220.6,704.1 1212.2,707.2C1203.7,710.4 1185.1,712.5 1176.6,712.7C1168.2,713.0 1164.5,711.6 1161.5,709.0C1158.4,706.4 1155.1,700.4 1158.4,697.2C1161.6,693.9 1171.5,690.9 1180.8,689.4C1190.0,687.8 1206.1,687.0 1213.8,687.8C1221.6,688.6 1227.6,690.8 1227.3,694.1Z" fill="url(#g1)" stroke="#121212" stroke-opacity="0.75" stroke-width="1.6"/>
<path d="M1173.5,622.5C1173.3,624.4 1166.0,627.6 1161.1,629.7C1156.1,631.9 1148.4,634.6 1143.8,635.2C1139.3,635.9 1136.0,634.7 1133.9,633.7C1131.7,632.7 1129.4,631.1 1131.0,629.3C1132.7,627.5 1138.6,624.7 1143.7,622.9C1148.9,621.0 1157.1,618.3 1162.1,618.2C1167.0,618.2 1173.7,620.6 1173.5,622.5Z" fill="url(#g1)" stroke="#121212" stroke-opacity="0.75" stroke-width="1.6"/>
<path d="M1230.2,622.3C1231.4,624.3 1222.9,628.3 1216.3,631.1C1209.7,633.8 1198.7,637.7 1190.6,638.8C1182.6,640.0 1171.4,639.2 1168.1,638.0C1164.8,636.8 1166.9,634.4 1170.9,631.7C1174.9,628.9 1185.7,623.5 1192.0,621.4C1198.4,619.3 1202.5,619.2 1208.9,619.3C1215.3,619.5 1228.9,620.3 1230.2,622.3Z" fill="url(#g1)" stroke="#121212" stroke-opacity="0.75" stroke-width="1.6"/>
<path d="M1222.7,784.8C1220.7,786.6 1212.0,788.5 1205.4,790.1C1198.8,791.7 1191.5,794.5 1183.0,794.4C1174.5,794.4 1159.8,791.4 1154.4,790.0C1149.1,788.6 1146.2,787.5 1150.9,785.9C1155.5,784.2 1171.2,781.3 1182.3,780.3C1193.5,779.2 1210.9,778.9 1217.6,779.7C1224.3,780.4 1224.7,783.1 1222.7,784.8Z" fill="url(#g4)" stroke="#121212" stroke-opacity="0.75" stroke-width="1.6"/>
<path d="M1231.1,610.6C1231.0,613.8 1227.0,619.1 1223.6,620.6C1220.2,622.2 1214.9,621.3 1210.7,620.0C1206.5,618.6 1200.1,615.0 1198.6,612.5C1197.2,610.1 1200.2,607.7 1202.0,605.2C1203.8,602.7 1205.6,598.2 1209.3,597.6C1213.0,597.0 1220.5,599.4 1224.2,601.6C1227.8,603.8 1231.2,607.4 1231.1,610.6Z" fill="url(#g1)" stroke="#121212" stroke-opacity="0.75" stroke-width="1.6"/>
<path d="M1149.9,645.0C1149.5,647.0 1150.3,649.9 1147.6,650.9C1145.0,651.8 1137.8,651.1 1134.0,650.7C1130.1,650.3 1125.6,650.1 1124.6,648.4C1123.5,646.7 1125.9,642.2 1127.6,640.4C1129.3,638.6 1130.8,637.9 1134.6,637.7C1138.4,637.5 1147.7,637.9 1150.3,639.1C1152.8,640.3 1150.4,643.1 1149.9,645.0Z" fill="url(#g2)" stroke="#121212" stroke-opacity="0.75" stroke-width="1.6"/>
<path d="M1191.2,573.4C1193.1,575.6 1192.4,579.2 1187.3,582.0C1182.2,584.8 1167.4,589.2 1160.6,590.0C1153.8,590.8 1148.5,589.1 1146.7,586.8C1145.0,584.5 1148.2,579.0 1150.1,576.4C1152.1,573.7 1154.2,572.4 1158.4,571.1C1162.7,569.8 1170.4,567.9 1175.8,568.3C1181.3,568.7 1189.3,571.1 1191.2,573.4Z" fill="url(#g3)" stroke="#121212" stroke-opacity="0.75" stroke-width="1.6"/>
<path d="M1183.4,737.7C1183.6,739.7 1180.5,744.9 1176.2,747.0C1171.9,749.2 1163.4,750.1 1157.5,750.7C1151.6,751.2 1143.5,751.5 1140.7,750.3C1137.9,749.1 1138.8,745.6 1140.7,743.6C1142.6,741.6 1146.3,739.6 1152.0,738.1C1157.7,736.7 1169.8,734.9 1175.0,734.9C1180.3,734.8 1183.2,735.7 1183.4,737.7Z" fill="url(#g2)" stroke="#121212" stroke-opacity="0.75" stroke-width="1.6"/>
<path d="M1164.7,778.2C1165.1,780.5 1161.5,784.9 1158.9,786.4C1156.3,787.8 1152.4,787.2 1149.1,787.0C1145.9,786.8 1140.9,787.0 1139.2,785.3C1137.6,783.5 1138.0,778.7 1139.2,776.6C1140.4,774.5 1143.5,773.3 1146.5,772.6C1149.4,771.9 1153.7,771.5 1156.8,772.4C1159.8,773.3 1164.4,775.9 1164.7,778.2Z" fill="url(#g2)" stroke="#121212" stroke-opacity="0.75" stroke-width="1.6"/>
<path d="M1178.3,611.4C1178.4,613.0 1175.7,616.0 1171.3,618.3C1167.0,620.6 1158.1,623.9 1152.3,625.1C1146.6,626.3 1139.7,626.4 1136.6,625.6C1133.6,624.7 1132.6,622.2 1134.1,620.2C1135.7,618.1 1139.8,615.3 1146.0,613.4C1152.2,611.5 1165.8,609.0 1171.2,608.7C1176.6,608.3 1178.3,609.8 1178.3,611.4Z" fill="url(#g1)" stroke="#121212" stroke-opacity="0.75" stroke-width="1.6"/>
<path d="M1181.8,669.0C1180.6,670.4 1170.9,669.6 1163.4,669.5C1156.0,669.3 1143.9,669.4 1137.1,668.2C1130.3,667.0 1125.2,663.7 1122.8,662.1C1120.3,660.4 1119.5,659.0 1122.5,658.2C1125.5,657.4 1132.5,656.5 1140.5,657.1C1148.5,657.6 1163.6,659.4 1170.5,661.4C1177.4,663.4 1183.0,667.7 1181.8,669.0Z" fill="url(#g2)" stroke="#121212" stroke-opacity="0.75" stroke-width="1.6"/>
<path d="M1252.8,597.2C1252.9,599.8 1245.8,602.9 1238.7,604.7C1231.5,606.6 1217.1,608.6 1209.9,608.3C1202.7,608.0 1198.0,605.1 1195.7,603.0C1193.4,601.0 1193.2,598.7 1196.0,596.1C1198.8,593.6 1205.3,588.8 1212.4,587.7C1219.5,586.5 1231.9,587.8 1238.6,589.4C1245.3,591.0 1252.8,594.7 1252.8,597.2Z" fill="url(#g2)" stroke="#121212" stroke-opacity="0.75" stroke-width="1.6"/>
<path d="M1211.9,619.6C1211.0,621.4 1205.3,624.4 1201.1,624.3C1196.9,624.1 1191.7,620.8 1186.7,618.6C1181.7,616.3 1173.7,613.1 1171.1,610.7C1168.5,608.3 1168.9,605.5 1171.0,604.4C1173.0,603.3 1177.4,602.9 1183.3,604.3C1189.2,605.8 1201.7,610.7 1206.5,613.2C1211.3,615.7 1212.9,617.7 1211.9,619.6Z" fill="url(#g2)" stroke="#121212" stroke-opacity="0.75" stroke-width="1.6"/>
<path d="M1173.4,568.7C1174.6,571.2 1167.6,575.7 1161.9,578.7C1156.3,581.7 1146.1,586.4 1139.8,586.9C1133.5,587.3 1127.0,584.2 1124.3,581.4C1121.6,578.6 1121.5,573.0 1123.6,570.2C1125.7,567.5 1131.5,566.0 1136.8,564.8C1142.0,563.7 1149.0,562.7 1155.2,563.3C1161.3,564.0 1172.3,566.1 1173.4,568.7Z" fill="url(#g1)" stroke="#121212" stroke-opacity="0.75" stroke-width="1.6"/>
<path d="M1200.7,766.1C1202.7,767.2 1199.0,769.0 1191.8,770.3C1184.7,771.7 1168.8,773.7 1157.8,774.2C1146.8,774.7 1131.0,773.9 1125.8,773.2C1120.6,772.5 1121.9,771.2 1126.6,770.0C1131.3,768.7 1145.1,766.6 1153.9,765.6C1162.7,764.6 1171.6,763.7 1179.4,763.8C1187.2,763.9 1198.6,765.0 1200.7,766.1Z" fill="url(#g4)" stroke="#121212" stroke-opacity="0.75" stroke-width="1.6"/>
<path d="M1214.5,628.1C1215.0,630.0 1214.5,632.4 1210.2,635.1C1205.9,637.7 1195.1,642.8 1188.8,644.1C1182.4,645.4 1175.9,643.8 1172.2,642.9C1168.5,641.9 1164.6,641.2 1166.6,638.3C1168.6,635.5 1177.5,628.0 1184.2,625.6C1191.0,623.2 1202.2,623.6 1207.2,624.0C1212.2,624.4 1214.0,626.3 1214.5,628.1Z" fill="url(#g4)" stroke="#121212" stroke-opacity="0.75" stroke-width="1.6"/>
<path d="M1153.8,627.1C1153.9,629.6 1149.6,632.4 1145.5,634.6C1141.4,636.8 1134.6,639.5 1129.2,640.2C1123.9,640.8 1116.3,640.1 1113.3,638.7C1110.3,637.2 1109.6,633.8 1111.3,631.3C1113.1,628.7 1118.2,625.1 1123.8,623.2C1129.4,621.3 1139.9,619.2 1144.9,619.8C1149.9,620.5 1153.7,624.6 1153.8,627.1Z" fill="url(#g1)" stroke="#121212" stroke-opacity="0.75" stroke-width="1.6"/>
<path d="M1204.7,671.8C1204.4,673.7 1199.6,677.0 1196.4,678.3C1193.3,679.6 1189.5,680.0 1185.8,679.6C1182.2,679.1 1176.5,677.1 1174.6,675.6C1172.7,674.2 1172.6,672.6 1174.6,670.9C1176.5,669.1 1182.2,665.5 1186.1,664.9C1190.0,664.3 1195.1,665.8 1198.2,667.0C1201.3,668.1 1205.0,669.9 1204.7,671.8Z" fill="url(#g2)" stroke="#121212" stroke-opacity="0.75" stroke-width="1.6"/>
<path d="M1154.1,779.8C1154.2,781.9 1147.7,784.5 1143.8,784.8C1139.8,785.1 1133.8,782.8 1130.4,781.7C1127.0,780.6 1124.8,780.0 1123.4,778.1C1121.9,776.3 1119.8,772.2 1121.6,770.8C1123.4,769.4 1130.6,769.5 1134.2,769.8C1137.8,770.0 1140.0,770.5 1143.3,772.2C1146.6,773.9 1154.0,777.7 1154.1,779.8Z" fill="url(#g4)" stroke="#121212" stroke-opacity="0.75" stroke-width="1.6"/>
<path d="M1228.8,663.6C1228.6,665.8 1222.9,670.6 1219.0,673.0C1215.1,675.4 1210.1,677.3 1205.3,678.0C1200.6,678.8 1193.7,678.3 1190.7,677.6C1187.7,676.9 1186.4,675.9 1187.3,673.8C1188.3,671.7 1191.1,667.4 1196.6,665.0C1202.1,662.6 1214.9,659.7 1220.3,659.5C1225.6,659.2 1229.0,661.3 1228.8,663.6Z" fill="url(#g2)" stroke="#121212" stroke-opacity="0.75" stroke-width="1.6"/>
<path d="M1261.9,718.3C1262.3,721.7 1248.3,730.1 1241.2,732.5C1234.1,734.9 1228.7,733.5 1219.4,732.9C1210.1,732.3 1192.2,730.8 1185.6,728.8C1179.1,726.8 1176.2,723.7 1180.0,721.0C1183.8,718.3 1198.5,714.2 1208.3,712.7C1218.2,711.3 1230.1,711.1 1239.1,712.1C1248.0,713.0 1261.6,714.9 1261.9,718.3Z" fill="url(#g1)" stroke="#121212" stroke-opacity="0.75" stroke-width="1.6"/>
<path d="M1169.4,584.7C1168.7,587.1 1158.6,591.6 1153.4,593.8C1148.3,596.0 1145.5,597.2 1138.4,597.9C1131.4,598.6 1114.7,599.2 1111.2,598.0C1107.7,596.8 1113.9,593.2 1117.5,590.8C1121.1,588.5 1126.1,585.8 1132.8,583.9C1139.4,582.0 1151.4,579.2 1157.5,579.4C1163.6,579.5 1170.1,582.3 1169.4,584.7Z" fill="url(#g2)" stroke="#121212" stroke-opacity="0.75" stroke-width="1.6"/>
<path d="M1228.8,589.9C1229.5,591.6 1222.9,595.2 1218.1,597.7C1213.2,600.2 1208.3,603.2 1199.7,605.0C1191.2,606.9 1170.9,609.6 1166.9,608.8C1163.0,608.0 1171.9,602.8 1175.9,600.2C1179.9,597.6 1184.6,595.2 1191.0,593.1C1197.3,590.9 1207.5,588.0 1213.8,587.5C1220.1,587.0 1228.1,588.2 1228.8,589.9Z" fill="url(#g4)" stroke="#121212" stroke-opacity="0.75" stroke-width="1.6"/>
<path d="M1248.7,657.3C1249.0,660.8 1243.7,660.4 1237.9,660.3C1232.2,660.2 1220.1,659.5 1214.1,657.0C1208.1,654.5 1203.6,649.3 1201.8,645.3C1200.1,641.3 1200.2,635.0 1203.4,632.9C1206.6,630.9 1215.8,632.1 1221.3,633.2C1226.7,634.3 1231.5,635.5 1236.1,639.5C1240.7,643.6 1248.4,653.9 1248.7,657.3Z" fill="url(#g3)" stroke="#121212" stroke-opacity="0.75" stroke-width="1.6"/>
<path d="M1202.5,609.8C1202.1,612.1 1198.2,614.6 1193.2,615.4C1188.2,616.3 1177.5,615.9 1172.4,615.1C1167.2,614.2 1163.2,612.8 1162.2,610.5C1161.1,608.2 1163.4,603.6 1165.9,601.3C1168.4,599.0 1172.0,596.6 1177.0,596.7C1181.9,596.8 1191.4,599.6 1195.7,601.7C1199.9,603.9 1202.9,607.5 1202.5,609.8Z" fill="url(#g4)" stroke="#121212" stroke-opacity="0.75" stroke-width="1.6"/>
<path d="M1191.0,640.1C1190.6,642.3 1182.8,644.7 1176.9,646.1C1171.0,647.6 1162.6,649.5 1155.5,648.8C1148.4,648.1 1136.7,643.9 1134.3,641.8C1131.9,639.8 1136.8,638.0 1140.9,636.4C1145.0,634.7 1152.5,632.4 1158.9,631.8C1165.3,631.2 1173.8,631.4 1179.2,632.8C1184.5,634.2 1191.4,637.9 1191.0,640.1Z" fill="url(#g3)" stroke="#121212" stroke-opacity="0.75" stroke-width="1.6"/>
<path d="M1169.1,573.7C1169.1,575.4 1167.8,579.1 1164.3,580.6C1160.8,582.0 1153.1,582.2 1147.9,582.4C1142.7,582.6 1134.8,582.7 1133.2,581.9C1131.5,581.1 1135.7,578.9 1138.2,577.4C1140.7,575.8 1143.9,573.7 1148.3,572.6C1152.7,571.5 1161.0,570.5 1164.5,570.7C1168.0,570.9 1169.2,572.1 1169.1,573.7Z" fill="url(#g2)" stroke="#121212" stroke-opacity="0.75" stroke-width="1.6"/>
<path d="M1257.9,584.9C1258.2,587.6 1254.1,591.5 1246.2,593.8C1238.4,596.1 1219.8,598.9 1210.6,598.7C1201.5,598.4 1194.4,594.7 1191.2,592.3C1187.9,589.8 1186.9,586.3 1191.0,584.0C1195.1,581.7 1207.0,579.3 1215.9,578.3C1224.8,577.2 1237.4,576.5 1244.4,577.6C1251.4,578.7 1257.6,582.2 1257.9,584.9Z" fill="url(#g2)" stroke="#121212" stroke-opacity="0.75" stroke-width="1.6"/>
<path d="M1152.0,775.4C1151.9,776.8 1150.6,777.2 1147.3,777.1C1144.0,776.9 1136.4,776.5 1132.1,774.8C1127.8,773.0 1122.7,768.4 1121.4,766.4C1120.2,764.4 1122.3,763.0 1124.9,762.6C1127.5,762.3 1133.2,763.1 1137.0,764.2C1140.9,765.3 1145.2,767.2 1147.7,769.1C1150.2,770.9 1152.0,774.1 1152.0,775.4Z" fill="url(#g1)" stroke="#121212" stroke-opacity="0.75" stroke-width="1.6"/>
<path d="M1208.5,618.3C1208.8,619.7 1204.2,621.5 1199.4,621.9C1194.6,622.3 1185.3,621.6 1179.8,620.8C1174.2,620.0 1168.6,618.4 1166.2,617.2C1163.7,616.0 1162.3,614.6 1165.1,613.5C1167.9,612.5 1177.7,610.9 1183.2,610.9C1188.7,610.9 1193.7,612.1 1198.0,613.3C1202.2,614.6 1208.3,616.9 1208.5,618.3Z" fill="url(#g3)" stroke="#121212" stroke-opacity="0.75" stroke-width="1.6"/>
<path d="M1244.5,761.5C1243.5,762.8 1234.4,762.7 1229.7,762.2C1225.0,761.7 1220.5,760.2 1216.5,758.4C1212.5,756.7 1208.0,753.7 1205.6,751.7C1203.2,749.6 1200.5,747.2 1202.0,746.4C1203.6,745.5 1209.4,745.4 1215.1,746.7C1220.7,748.0 1230.9,751.5 1235.8,754.0C1240.8,756.5 1245.6,760.1 1244.5,761.5Z" fill="url(#g1)" stroke="#121212" stroke-opacity="0.75" stroke-width="1.6"/>
<path d="M1191.5,594.4C1192.4,597.6 1190.9,604.6 1185.9,608.8C1180.8,613.0 1171.5,617.6 1161.2,619.7C1150.9,621.8 1129.9,623.9 1124.1,621.6C1118.3,619.3 1123.0,610.6 1126.4,605.9C1129.8,601.3 1135.3,596.6 1144.3,593.8C1153.3,591.1 1172.6,589.6 1180.4,589.7C1188.3,589.7 1190.5,591.2 1191.5,594.4Z" fill="url(#g1)" stroke="#121212" stroke-opacity="0.75" stroke-width="1.6"/>
<path d="M1234.0,738.0C1234.4,739.3 1229.6,740.6 1226.3,741.2C1223.0,741.8 1219.6,741.9 1214.0,741.4C1208.4,741.0 1195.4,739.6 1192.5,738.5C1189.5,737.5 1192.9,736.3 1196.3,735.2C1199.8,734.1 1208.6,732.2 1213.2,732.0C1217.8,731.7 1220.5,732.6 1223.9,733.6C1227.4,734.6 1233.6,736.7 1234.0,738.0Z" fill="url(#g2)" stroke="#121212" stroke-opacity="0.75" stroke-width="1.6"/>
<path d="M1246.0,608.7C1246.3,612.1 1238.8,617.5 1231.8,619.1C1224.9,620.7 1213.2,619.6 1204.2,618.2C1195.2,616.7 1181.2,613.7 1177.8,610.4C1174.3,607.0 1179.0,600.6 1183.4,598.2C1187.8,595.9 1196.2,596.3 1204.0,596.3C1211.8,596.3 1223.2,596.2 1230.2,598.3C1237.2,600.3 1245.8,605.2 1246.0,608.7Z" fill="url(#g2)" stroke="#121212" stroke-opacity="0.75" stroke-width="1.6"/>
<path d="M1162.3,780.1C1161.6,782.0 1160.5,783.3 1156.1,785.7C1151.8,788.1 1143.1,793.0 1136.0,794.6C1128.9,796.1 1117.6,795.8 1113.7,795.1C1109.9,794.5 1109.7,793.3 1112.8,790.7C1115.9,788.0 1124.3,782.1 1132.3,779.4C1140.2,776.6 1155.6,774.1 1160.6,774.2C1165.6,774.4 1163.0,778.2 1162.3,780.1Z" fill="url(#g3)" stroke="#121212" stroke-opacity="0.75" stroke-width="1.6"/>
<path d="M1207.8,673.3C1208.6,674.8 1207.2,675.6 1201.5,675.8C1195.9,676.0 1182.9,675.8 1174.0,674.8C1165.1,673.8 1152.3,671.2 1148.1,669.7C1143.8,668.2 1144.2,666.7 1148.5,665.8C1152.7,664.9 1165.5,664.3 1173.6,664.5C1181.7,664.7 1191.3,665.6 1197.0,667.1C1202.7,668.6 1207.1,671.9 1207.8,673.3Z" fill="url(#g1)" stroke="#121212" stroke-opacity="0.75" stroke-width="1.6"/>
<path d="M1199.6,774.0C1199.2,776.5 1192.8,778.1 1189.4,779.3C1186.0,780.6 1183.4,782.0 1179.2,781.3C1175.0,780.7 1166.5,778.1 1164.3,775.7C1162.2,773.2 1164.2,769.6 1166.2,766.8C1168.2,764.1 1172.2,759.5 1176.4,759.1C1180.6,758.7 1187.8,761.9 1191.6,764.4C1195.5,766.9 1199.9,771.6 1199.6,774.0Z" fill="url(#g3)" stroke="#121212" stroke-opacity="0.75" stroke-width="1.6"/>
<path d="M1180.2,695.9C1180.9,699.8 1171.9,711.4 1165.5,715.8C1159.1,720.1 1149.3,721.0 1142.0,721.9C1134.8,722.8 1126.1,722.9 1122.0,721.1C1117.8,719.3 1114.8,714.7 1116.9,711.1C1119.0,707.4 1127.2,702.2 1134.6,699.1C1142.1,696.0 1154.1,693.1 1161.7,692.6C1169.3,692.0 1179.6,692.0 1180.2,695.9Z" fill="url(#g2)" stroke="#121212" stroke-opacity="0.75" stroke-width="1.6"/>
<path d="M1212.9,616.3C1213.9,617.3 1208.4,620.6 1200.2,623.0C1192.1,625.4 1174.0,629.2 1164.0,630.6C1154.0,632.1 1144.0,632.2 1140.1,631.8C1136.3,631.4 1137.8,629.9 1140.8,628.2C1143.9,626.5 1149.4,623.5 1158.3,621.6C1167.1,619.7 1185.0,617.8 1194.1,616.9C1203.2,616.0 1211.8,615.2 1212.9,616.3Z" fill="url(#g2)" stroke="#121212" stroke-opacity="0.75" stroke-width="1.6"/>
<path d="M1147.8,625.8C1148.1,628.4 1143.5,632.0 1139.2,634.2C1134.9,636.4 1125.6,639.4 1121.8,639.0C1118.0,638.6 1117.8,634.9 1116.3,631.9C1114.9,629.0 1112.1,624.0 1113.2,621.3C1114.3,618.6 1119.0,616.3 1123.0,615.9C1127.0,615.4 1133.0,617.0 1137.1,618.6C1141.2,620.3 1147.4,623.2 1147.8,625.8Z" fill="url(#g1)" stroke="#121212" stroke-opacity="0.75" stroke-width="1.6"/>
<path d="M1211.9,742.0C1212.7,744.0 1207.5,744.4 1203.0,745.6C1198.6,746.7 1191.1,749.2 1185.0,749.1C1179.0,749.0 1170.1,746.6 1166.9,744.8C1163.7,743.0 1163.0,740.4 1166.0,738.3C1168.9,736.3 1179.4,733.3 1184.8,732.5C1190.2,731.7 1193.7,732.1 1198.3,733.6C1202.8,735.2 1211.1,740.1 1211.9,742.0Z" fill="url(#g2)" stroke="#121212" stroke-opacity="0.75" stroke-width="1.6"/>
<path d="M1230.1,619.7C1228.6,623.4 1219.2,630.3 1213.6,633.3C1208.1,636.2 1203.4,637.4 1196.6,637.5C1189.9,637.7 1177.7,636.7 1173.2,634.4C1168.7,632.0 1167.0,627.2 1169.8,623.4C1172.6,619.7 1181.2,613.9 1190.0,611.8C1198.7,609.7 1215.4,609.6 1222.1,610.9C1228.8,612.2 1231.5,616.0 1230.1,619.7Z" fill="url(#g4)" stroke="#121212" stroke-opacity="0.75" stroke-width="1.6"/>
<path d="M639.4,805.4C639.4,806.2 638.7,808.2 637.3,809.2C635.9,810.2 632.8,811.4 631.1,811.5C629.4,811.5 627.8,810.5 627.2,809.4C626.5,808.4 626.9,806.4 627.3,805.3C627.8,804.2 628.3,802.9 629.9,802.7C631.5,802.5 635.5,803.6 637.1,804.0C638.7,804.4 639.3,804.5 639.4,805.4Z" fill="url(#g2)" stroke="#121212" stroke-opacity="0.75" stroke-width="1.6"/>
<path d="M930.8,774.3C930.7,775.4 931.2,776.9 930.0,777.1C928.8,777.4 925.4,776.2 923.8,775.8C922.2,775.3 921.4,775.1 920.6,774.2C919.7,773.3 918.3,771.2 918.9,770.2C919.5,769.2 922.4,768.3 924.4,768.3C926.4,768.3 929.6,769.4 930.7,770.4C931.7,771.4 931.0,773.2 930.8,774.3Z" fill="url(#g2)" stroke="#121212" stroke-opacity="0.75" stroke-width="1.6"/>
<path d="M298.6,794.7C298.8,796.2 298.2,797.9 296.6,798.7C295.1,799.5 291.8,800.2 289.4,799.6C287.1,799.0 283.3,796.4 282.4,795.1C281.4,793.8 282.2,792.9 283.6,792.0C285.1,791.0 289.1,789.9 291.1,789.5C293.1,789.2 294.4,789.0 295.6,789.9C296.9,790.7 298.4,793.3 298.6,794.7Z" fill="url(#g4)" stroke="#121212" stroke-opacity="0.75" stroke-width="1.6"/>
<path d="M278.9,781.4C280.0,784.0 280.3,788.8 279.2,790.7C278.1,792.6 274.3,792.9 272.3,793.0C270.3,793.1 268.7,792.9 267.2,791.3C265.7,789.6 263.4,785.6 263.5,783.0C263.6,780.5 266.2,777.1 267.8,775.9C269.4,774.6 271.0,774.4 272.9,775.3C274.7,776.3 277.9,778.9 278.9,781.4Z" fill="url(#g1)" stroke="#121212" stroke-opacity="0.75" stroke-width="1.6"/>
<path d="M595.6,781.7C595.3,783.2 590.4,787.4 586.6,789.5C582.7,791.6 576.6,793.7 572.7,794.5C568.8,795.4 564.8,795.7 563.2,794.7C561.7,793.7 561.7,790.4 563.2,788.6C564.7,786.9 568.3,785.4 572.5,784.0C576.7,782.7 584.4,780.9 588.3,780.5C592.1,780.1 595.8,780.2 595.6,781.7Z" fill="url(#g1)" stroke="#121212" stroke-opacity="0.75" stroke-width="1.6"/>
<path d="M413.1,764.1C411.9,767.4 408.4,771.1 406.1,771.8C403.8,772.5 400.8,770.1 399.2,768.3C397.6,766.5 396.9,763.5 396.6,760.9C396.3,758.4 396.2,755.0 397.6,753.0C399.0,751.0 402.3,749.3 404.9,749.2C407.5,749.0 411.7,749.7 413.1,752.2C414.4,754.6 414.3,760.8 413.1,764.1Z" fill="url(#g2)" stroke="#121212" stroke-opacity="0.75" stroke-width="1.6"/>
<path d="M752.4,805.7C752.3,807.3 750.0,809.2 746.5,810.0C743.0,810.8 735.6,811.2 731.4,810.6C727.2,809.9 723.0,808.1 721.3,806.2C719.7,804.3 719.3,800.6 721.6,799.3C723.9,798.0 731.0,797.9 735.2,798.1C739.5,798.4 744.3,799.5 747.1,800.7C750.0,802.0 752.5,804.2 752.4,805.7Z" fill="url(#g1)" stroke="#121212" stroke-opacity="0.75" stroke-width="1.6"/>
<path d="M921.7,744.4C922.5,747.1 921.7,752.8 920.3,755.0C918.8,757.2 915.2,757.7 913.0,757.5C910.8,757.3 908.4,755.7 906.8,753.8C905.2,751.9 903.2,748.2 903.7,746.1C904.2,744.0 907.7,742.3 909.8,741.1C911.9,739.9 914.0,738.5 916.0,739.0C918.0,739.6 921.0,741.7 921.7,744.4Z" fill="url(#g3)" stroke="#121212" stroke-opacity="0.75" stroke-width="1.6"/>
<path d="M115.0,769.5C115.0,770.6 113.4,770.8 111.9,771.3C110.5,771.7 108.0,772.2 106.3,772.1C104.7,772.0 102.7,771.6 102.0,770.7C101.3,769.7 101.5,767.3 102.4,766.3C103.3,765.3 105.9,765.0 107.5,764.8C109.1,764.6 110.5,764.3 111.7,765.1C113.0,765.9 115.0,768.5 115.0,769.5Z" fill="url(#g3)" stroke="#121212" stroke-opacity="0.75" stroke-width="1.6"/>
<path d="M286.9,768.0C286.7,769.0 284.6,771.3 283.2,772.0C281.9,772.7 280.4,772.3 278.8,771.9C277.2,771.5 274.4,770.7 273.4,769.8C272.4,768.8 271.9,767.1 272.8,766.2C273.7,765.3 277.0,764.6 278.9,764.6C280.9,764.5 283.1,765.3 284.5,765.9C285.8,766.4 287.1,766.9 286.9,768.0Z" fill="url(#g4)" stroke="#121212" stroke-opacity="0.75" stroke-width="1.6"/>
<path d="M506.7,749.4C506.2,751.1 505.4,753.8 504.0,754.8C502.7,755.8 500.5,756.2 498.7,755.5C496.9,754.9 494.1,752.4 493.4,750.8C492.7,749.2 493.7,747.0 494.5,745.7C495.4,744.3 496.3,742.9 498.3,742.7C500.4,742.5 505.3,743.4 506.7,744.5C508.1,745.6 507.1,747.7 506.7,749.4Z" fill="url(#g2)" stroke="#121212" stroke-opacity="0.75" stroke-width="1.6"/>
<path d="M59.1,749.8C59.9,752.1 59.4,755.1 58.0,757.1C56.7,759.1 53.2,761.8 50.8,761.9C48.4,761.9 45.4,759.2 43.9,757.4C42.3,755.6 41.3,752.9 41.6,750.9C42.0,748.9 43.9,746.3 45.9,745.1C47.8,743.9 51.0,743.0 53.2,743.8C55.4,744.5 58.3,747.6 59.1,749.8Z" fill="url(#g4)" stroke="#121212" stroke-opacity="0.75" stroke-width="1.6"/>
<path d="M893.4,790.3C893.1,791.6 890.9,791.3 888.8,791.5C886.7,791.7 882.6,792.1 880.7,791.2C878.7,790.4 877.0,787.8 877.1,786.2C877.1,784.6 879.7,782.3 881.0,781.4C882.3,780.5 883.0,780.6 884.7,780.9C886.4,781.2 889.6,781.8 891.1,783.4C892.6,784.9 893.8,788.9 893.4,790.3Z" fill="url(#g3)" stroke="#121212" stroke-opacity="0.75" stroke-width="1.6"/>
<path d="M812.2,763.4C811.4,764.3 808.4,765.1 806.1,765.2C803.8,765.4 801.2,765.4 798.5,764.3C795.9,763.2 791.3,760.0 790.2,758.7C789.1,757.4 790.0,756.7 791.9,756.4C793.7,756.1 798.2,756.4 801.4,757.0C804.6,757.5 809.2,758.8 811.1,759.9C812.9,760.9 813.1,762.5 812.2,763.4Z" fill="url(#g1)" stroke="#121212" stroke-opacity="0.75" stroke-width="1.6"/>
<path d="M803.4,791.6C803.0,793.3 799.5,795.6 797.3,796.1C795.1,796.7 792.8,795.8 790.3,795.0C787.7,794.2 783.1,793.0 781.8,791.2C780.4,789.4 780.2,785.8 782.1,784.3C784.0,782.8 790.2,782.1 793.1,782.4C796.1,782.7 797.9,784.4 799.7,785.9C801.4,787.5 803.8,789.9 803.4,791.6Z" fill="url(#g3)" stroke="#121212" stroke-opacity="0.75" stroke-width="1.6"/>
<path d="M253.1,788.1C253.4,791.4 253.1,795.8 252.0,798.2C251.0,800.6 248.5,802.6 246.8,802.4C245.1,802.1 243.1,799.5 241.9,796.5C240.8,793.5 239.3,787.6 240.0,784.4C240.6,781.2 243.9,778.4 245.6,777.4C247.3,776.5 249.1,776.9 250.4,778.7C251.6,780.5 252.9,784.9 253.1,788.1Z" fill="url(#g3)" stroke="#121212" stroke-opacity="0.75" stroke-width="1.6"/>
<path d="M605.3,757.4C606.2,760.0 606.9,762.1 604.8,764.1C602.7,766.0 595.7,769.0 592.5,769.3C589.2,769.6 586.8,768.1 585.3,765.9C583.8,763.7 583.2,758.9 583.5,756.1C583.8,753.2 584.5,750.2 587.1,749.0C589.7,747.7 596.1,747.0 599.1,748.4C602.1,749.8 604.3,754.8 605.3,757.4Z" fill="url(#g4)" stroke="#121212" stroke-opacity="0.75" stroke-width="1.6"/>
<path d="M254.4,792.3C254.5,794.6 255.1,797.5 253.5,798.5C251.9,799.5 246.9,798.8 245.0,798.3C243.1,797.8 243.1,796.9 242.3,795.3C241.4,793.8 239.1,790.9 239.9,789.1C240.7,787.3 245.0,785.1 247.2,784.5C249.4,783.9 251.8,783.9 253.1,785.2C254.3,786.5 254.4,790.1 254.4,792.3Z" fill="url(#g4)" stroke="#121212" stroke-opacity="0.75" stroke-width="1.6"/>
<path d="M32.6,802.1C32.2,803.8 25.9,804.7 22.7,805.3C19.5,805.8 16.9,806.4 13.3,805.3C9.6,804.2 2.8,800.4 0.9,798.6C-1.1,796.8 -0.2,795.5 1.7,794.5C3.6,793.5 8.5,792.4 12.3,792.5C16.2,792.6 21.5,793.5 24.9,795.1C28.3,796.7 33.0,800.4 32.6,802.1Z" fill="url(#g3)" stroke="#121212" stroke-opacity="0.75" stroke-width="1.6"/>
<path d="M1139.7,797.9C1139.6,799.0 1137.9,800.4 1134.6,800.9C1131.3,801.5 1123.9,801.8 1119.9,801.2C1115.9,800.6 1112.7,798.8 1110.6,797.6C1108.6,796.4 1105.7,794.9 1107.6,794.0C1109.4,793.1 1117.1,792.3 1121.7,792.4C1126.4,792.5 1132.3,793.6 1135.3,794.6C1138.3,795.5 1139.8,796.8 1139.7,797.9Z" fill="url(#g2)" stroke="#121212" stroke-opacity="0.75" stroke-width="1.6"/>
<path d="M1155.0,748.1C1155.5,750.3 1156.3,754.2 1154.8,755.8C1153.3,757.5 1149.0,758.3 1146.1,757.9C1143.2,757.5 1138.7,755.2 1137.4,753.2C1136.0,751.3 1137.0,748.3 1138.0,746.2C1139.1,744.1 1141.5,741.2 1143.9,740.6C1146.2,740.0 1150.3,741.1 1152.2,742.4C1154.0,743.6 1154.6,745.9 1155.0,748.1Z" fill="url(#g4)" stroke="#121212" stroke-opacity="0.75" stroke-width="1.6"/>
<path d="M296.4,766.2C296.5,767.0 296.9,768.4 295.5,769.0C294.0,769.5 290.2,769.9 287.5,769.5C284.7,769.1 279.9,767.5 278.9,766.6C277.9,765.7 279.9,764.5 281.4,763.9C282.9,763.3 285.5,762.9 287.7,763.0C289.9,763.1 293.4,763.7 294.8,764.3C296.3,764.8 296.3,765.4 296.4,766.2Z" fill="url(#g3)" stroke="#121212" stroke-opacity="0.75" stroke-width="1.6"/>
<path d="M321.0,776.1C320.8,779.3 320.3,785.4 317.4,787.0C314.5,788.7 307.2,787.0 303.6,785.8C300.0,784.7 296.4,783.7 295.8,780.3C295.3,776.9 297.8,768.7 300.3,765.6C302.7,762.4 307.6,761.3 310.7,761.7C313.8,762.0 317.1,765.4 318.8,767.8C320.6,770.2 321.3,772.9 321.0,776.1Z" fill="url(#g3)" stroke="#121212" stroke-opacity="0.75" stroke-width="1.6"/>
<path d="M681.3,797.9C682.0,801.1 681.5,805.8 679.4,808.4C677.2,811.0 673.1,812.6 668.3,813.6C663.5,814.7 653.4,816.4 650.6,814.4C647.8,812.5 649.7,806.1 651.3,802.0C652.9,797.9 656.2,792.1 660.1,790.0C664.1,787.9 671.7,788.1 675.2,789.4C678.8,790.8 680.6,794.8 681.3,797.9Z" fill="url(#g2)" stroke="#121212" stroke-opacity="0.75" stroke-width="1.6"/>
<path d="M551.3,802.6C551.7,804.4 551.1,808.7 547.8,811.4C544.4,814.2 536.0,817.9 531.2,819.0C526.3,820.0 520.5,819.5 518.7,817.8C516.9,816.1 519.2,811.2 520.4,808.9C521.6,806.6 521.6,805.3 525.8,803.9C530.0,802.4 541.2,800.3 545.4,800.1C549.7,799.9 550.9,800.7 551.3,802.6Z" fill="url(#g2)" stroke="#121212" stroke-opacity="0.75" stroke-width="1.6"/>
<path d="M289.7,769.1C288.7,771.6 284.4,776.7 282.5,777.7C280.5,778.8 279.4,776.9 277.9,775.3C276.5,773.7 274.2,770.0 273.9,767.9C273.6,765.8 274.8,764.4 276.0,762.6C277.3,760.9 279.5,757.3 281.5,757.4C283.6,757.4 287.0,761.2 288.4,763.1C289.7,765.1 290.7,766.7 289.7,769.1Z" fill="url(#g2)" stroke="#121212" stroke-opacity="0.75" stroke-width="1.6"/>
<path d="M308.2,802.7C307.6,805.1 305.0,807.5 303.2,808.3C301.4,809.1 299.1,808.8 297.4,807.6C295.7,806.4 293.6,803.4 293.1,801.2C292.7,799.1 293.2,796.3 294.7,794.7C296.1,793.1 299.6,791.7 301.7,791.5C303.8,791.3 306.0,791.8 307.0,793.7C308.1,795.5 308.9,800.2 308.2,802.7Z" fill="url(#g1)" stroke="#121212" stroke-opacity="0.75" stroke-width="1.6"/>
<path d="M857.1,774.1C856.9,775.6 857.1,776.5 853.8,776.9C850.6,777.4 841.7,777.4 837.6,776.9C833.5,776.3 831.2,775.0 829.2,773.5C827.3,771.9 824.4,768.9 826.0,767.5C827.7,766.1 834.3,764.9 839.2,765.0C844.1,765.2 852.5,766.7 855.5,768.2C858.5,769.7 857.4,772.7 857.1,774.1Z" fill="url(#g4)" stroke="#121212" stroke-opacity="0.75" stroke-width="1.6"/>
<path d="M740.3,760.0C740.4,762.7 739.4,766.5 738.2,768.0C737.0,769.4 734.7,769.3 732.9,768.7C731.1,768.2 728.1,766.9 727.4,764.7C726.6,762.5 727.4,757.7 728.5,755.4C729.6,753.1 732.3,751.4 733.9,750.8C735.4,750.2 736.7,750.4 737.7,752.0C738.8,753.5 740.2,757.3 740.3,760.0Z" fill="url(#g5)" stroke="#121212" stroke-opacity="0.75" stroke-width="1.6"/>
<path d="M168.6,758.0C169.0,759.4 169.7,760.9 168.5,761.7C167.3,762.5 163.0,763.0 161.4,762.8C159.7,762.6 159.3,761.7 158.7,760.6C158.0,759.6 157.2,757.8 157.5,756.6C157.7,755.5 158.9,754.5 160.4,753.9C161.8,753.4 164.8,752.5 166.2,753.2C167.5,753.9 168.3,756.5 168.6,758.0Z" fill="url(#g1)" stroke="#121212" stroke-opacity="0.75" stroke-width="1.6"/>
<path d="M971.1,768.6C971.6,770.1 970.9,773.4 969.7,775.4C968.5,777.5 966.6,780.5 964.0,781.1C961.4,781.7 956.3,780.3 954.0,779.0C951.8,777.8 950.0,775.3 950.4,773.6C950.7,771.8 953.5,769.9 956.1,768.7C958.8,767.5 963.8,766.5 966.3,766.5C968.8,766.5 970.5,767.1 971.1,768.6Z" fill="url(#g3)" stroke="#121212" stroke-opacity="0.75" stroke-width="1.6"/>
<path d="M863.5,806.0C863.1,807.2 861.8,807.9 860.1,808.4C858.4,808.9 854.8,809.3 853.1,809.0C851.3,808.7 850.2,808.0 849.8,806.6C849.4,805.1 849.9,801.6 850.9,800.3C851.8,799.1 853.6,798.8 855.5,799.0C857.4,799.2 861.1,800.4 862.4,801.5C863.8,802.7 863.9,804.9 863.5,806.0Z" fill="url(#g1)" stroke="#121212" stroke-opacity="0.75" stroke-width="1.6"/>
<path d="M712.5,807.7C712.3,810.1 710.8,814.6 706.7,815.1C702.6,815.7 692.2,813.2 687.9,811.1C683.5,809.0 681.3,805.3 680.8,802.3C680.2,799.3 682.5,795.0 684.6,793.2C686.7,791.3 689.6,789.9 693.5,791.2C697.3,792.4 704.4,798.0 707.6,800.8C710.8,803.6 712.6,805.3 712.5,807.7Z" fill="url(#g2)" stroke="#121212" stroke-opacity="0.75" stroke-width="1.6"/>
<path d="M223.0,779.0C223.1,780.8 222.3,783.3 220.0,784.4C217.6,785.6 211.8,786.2 208.9,785.9C206.0,785.6 204.3,784.0 202.5,782.5C200.7,781.1 196.8,778.9 198.1,777.4C199.4,775.9 206.7,774.3 210.3,773.7C213.8,773.0 217.2,772.7 219.3,773.6C221.4,774.4 222.9,777.2 223.0,779.0Z" fill="url(#g3)" stroke="#121212" stroke-opacity="0.75" stroke-width="1.6"/>
<path d="M826.1,768.2C825.3,769.6 820.5,769.9 817.6,770.2C814.8,770.5 811.8,770.9 809.0,770.1C806.2,769.3 801.6,767.0 800.8,765.3C800.1,763.7 802.4,761.4 804.4,760.3C806.4,759.2 810.0,758.4 812.9,758.7C815.9,758.9 820.0,760.3 822.2,761.9C824.4,763.5 826.8,766.8 826.1,768.2Z" fill="url(#g2)" stroke="#121212" stroke-opacity="0.75" stroke-width="1.6"/>
<path d="M1148.8,757.0C1148.5,758.1 1147.4,759.5 1145.3,760.2C1143.3,761.0 1139.8,761.9 1136.6,761.6C1133.3,761.2 1127.6,759.3 1125.9,758.2C1124.2,757.2 1124.9,756.6 1126.4,755.4C1127.9,754.3 1131.5,751.7 1135.0,751.4C1138.4,751.0 1144.7,752.3 1147.0,753.3C1149.3,754.2 1149.1,755.8 1148.8,757.0Z" fill="url(#g3)" stroke="#121212" stroke-opacity="0.75" stroke-width="1.6"/>
<path d="M796.7,766.8C797.1,768.6 794.8,772.7 793.3,774.6C791.8,776.4 790.1,777.3 787.5,777.8C784.9,778.3 779.7,778.7 777.7,777.6C775.6,776.5 774.9,772.9 775.4,771.0C775.8,769.2 777.8,768.0 780.4,766.7C783.0,765.4 788.4,763.3 791.1,763.3C793.8,763.3 796.3,764.9 796.7,766.8Z" fill="url(#g3)" stroke="#121212" stroke-opacity="0.75" stroke-width="1.6"/>
<path d="M1217.4,800.5C1217.0,802.3 1213.7,804.3 1211.5,804.5C1209.3,804.8 1206.4,802.8 1204.3,802.0C1202.3,801.2 1200.2,801.3 1199.4,799.6C1198.6,797.8 1197.9,793.1 1199.6,791.6C1201.3,790.0 1206.9,790.0 1209.3,790.4C1211.8,790.7 1212.9,792.0 1214.2,793.7C1215.6,795.4 1217.9,798.7 1217.4,800.5Z" fill="url(#g4)" stroke="#121212" stroke-opacity="0.75" stroke-width="1.6"/>
<path d="M276.9,759.6C277.0,760.8 275.2,762.3 272.8,762.8C270.5,763.4 266.1,764.1 262.7,762.9C259.3,761.7 254.0,757.2 252.6,755.4C251.2,753.6 252.8,753.2 254.4,752.2C256.0,751.3 259.0,749.3 262.0,749.8C265.1,750.3 270.1,753.6 272.6,755.2C275.1,756.9 276.9,758.3 276.9,759.6Z" fill="url(#g1)" stroke="#121212" stroke-opacity="0.75" stroke-width="1.6"/>
<path d="M861.8,775.2C861.8,777.3 860.3,778.1 858.9,779.6C857.6,781.0 855.4,783.6 853.7,783.8C851.9,784.0 849.4,782.7 848.3,780.7C847.3,778.7 847.0,774.5 847.3,771.8C847.6,769.1 848.2,765.2 850.1,764.4C852.0,763.6 856.8,765.3 858.8,767.1C860.7,768.9 861.8,773.1 861.8,775.2Z" fill="url(#g4)" stroke="#121212" stroke-opacity="0.75" stroke-width="1.6"/>
<path d="M393.6,793.9C393.3,795.5 389.4,797.1 386.5,798.1C383.5,799.1 379.9,800.4 375.7,799.9C371.5,799.4 363.1,796.5 361.0,795.0C358.9,793.4 361.0,792.3 363.3,790.6C365.5,789.0 370.2,785.3 374.4,785.0C378.6,784.7 385.2,787.2 388.4,788.7C391.6,790.2 393.9,792.3 393.6,793.9Z" fill="url(#g2)" stroke="#121212" stroke-opacity="0.75" stroke-width="1.6"/>
<path d="M65.6,781.3C65.5,782.5 65.4,785.1 63.6,785.4C61.8,785.8 57.1,784.3 54.7,783.3C52.3,782.3 49.9,780.9 49.2,779.5C48.4,778.1 48.9,776.0 50.3,775.0C51.6,774.0 55.0,773.0 57.3,773.5C59.7,774.0 63.1,776.6 64.5,777.9C65.9,779.2 65.8,780.0 65.6,781.3Z" fill="url(#g5)" stroke="#121212" stroke-opacity="0.75" stroke-width="1.6"/>
<path d="M793.7,770.4C793.5,772.1 791.4,774.2 789.7,775.6C787.9,777.0 785.4,778.5 783.1,778.6C780.9,778.6 777.9,777.6 776.1,775.9C774.4,774.3 772.1,770.6 772.6,768.7C773.0,766.8 776.0,764.9 779.0,764.3C782.0,763.7 788.2,764.0 790.6,765.0C793.1,766.0 793.8,768.6 793.7,770.4Z" fill="url(#g3)" stroke="#121212" stroke-opacity="0.75" stroke-width="1.6"/>
<path d="M861.3,810.4C861.2,812.5 857.1,815.4 854.4,816.4C851.7,817.4 847.9,817.2 845.1,816.2C842.2,815.2 838.2,812.5 837.4,810.4C836.5,808.3 838.3,805.4 840.0,803.6C841.6,801.7 844.8,799.3 847.3,799.3C849.8,799.4 852.5,802.1 854.9,803.9C857.2,805.7 861.4,808.3 861.3,810.4Z" fill="url(#g5)" stroke="#121212" stroke-opacity="0.75" stroke-width="1.6"/>
<path d="M141.2,752.0C141.4,753.4 141.1,755.7 138.1,756.7C135.1,757.7 127.4,758.4 123.1,758.1C118.8,757.8 113.3,756.4 112.3,755.2C111.3,754.0 114.5,752.1 117.0,750.8C119.5,749.6 123.9,748.2 127.2,747.9C130.5,747.5 134.5,748.0 136.8,748.7C139.2,749.4 141.0,750.7 141.2,752.0Z" fill="url(#g5)" stroke="#121212" stroke-opacity="0.75" stroke-width="1.6"/>
<path d="M102.2,776.8C101.2,779.8 99.3,783.4 97.3,784.2C95.3,785.1 92.0,783.5 90.3,782.1C88.6,780.8 87.2,778.7 87.0,776.1C86.9,773.5 87.5,768.6 89.1,766.2C90.8,763.9 94.5,762.0 96.8,762.0C99.2,762.1 102.2,764.0 103.1,766.5C104.0,769.0 103.2,773.9 102.2,776.8Z" fill="url(#g1)" stroke="#121212" stroke-opacity="0.75" stroke-width="1.6"/>
<path d="M100.0,755.5C100.2,757.2 100.2,760.4 99.2,761.5C98.2,762.6 95.4,762.3 93.8,762.2C92.2,762.0 90.4,761.7 89.6,760.6C88.7,759.4 88.1,756.7 88.7,755.2C89.4,753.8 92.0,752.3 93.5,751.7C95.0,751.0 96.6,750.7 97.7,751.3C98.8,751.9 99.7,753.8 100.0,755.5Z" fill="url(#g5)" stroke="#121212" stroke-opacity="0.75" stroke-width="1.6"/>
<path d="M815.8,793.9C815.6,795.5 814.2,797.3 812.7,798.6C811.2,799.9 808.7,801.9 806.9,801.7C805.0,801.5 802.6,799.3 801.5,797.5C800.3,795.7 799.4,792.3 800.0,791.0C800.6,789.6 802.9,789.8 805.2,789.6C807.5,789.3 812.1,788.6 813.8,789.3C815.6,790.1 815.9,792.4 815.8,793.9Z" fill="url(#g1)" stroke="#121212" stroke-opacity="0.75" stroke-width="1.6"/>
<path d="M217.9,790.0C218.7,792.0 214.7,794.5 211.2,797.1C207.8,799.7 200.7,804.7 197.3,805.6C193.9,806.5 192.6,804.4 190.9,802.4C189.1,800.4 186.6,796.1 187.0,793.5C187.4,790.9 190.2,788.2 193.4,786.7C196.6,785.2 202.2,784.0 206.2,784.5C210.3,785.1 217.0,787.9 217.9,790.0Z" fill="url(#g2)" stroke="#121212" stroke-opacity="0.75" stroke-width="1.6"/>
<path d="M980.5,779.4C980.2,782.6 975.7,786.4 972.6,788.5C969.4,790.5 966.2,792.8 961.7,791.5C957.2,790.2 947.7,783.5 945.6,780.6C943.6,777.7 946.9,776.4 949.6,774.2C952.2,772.0 957.4,768.3 961.6,767.5C965.8,766.6 971.5,767.3 974.6,769.3C977.8,771.3 980.9,776.2 980.5,779.4Z" fill="url(#g2)" stroke="#121212" stroke-opacity="0.75" stroke-width="1.6"/>
<path d="M1029.1,772.8C1028.4,773.5 1025.1,774.5 1023.3,774.8C1021.5,775.0 1020.3,774.9 1018.5,774.5C1016.8,774.1 1013.8,773.2 1012.9,772.4C1012.0,771.5 1012.2,770.0 1013.1,769.4C1014.1,768.8 1016.0,768.5 1018.4,768.7C1020.8,768.9 1025.9,769.9 1027.7,770.6C1029.5,771.2 1029.9,772.1 1029.1,772.8Z" fill="url(#g2)" stroke="#121212" stroke-opacity="0.75" stroke-width="1.6"/>
<path d="M70.1,768.4C70.1,769.8 67.5,771.0 65.1,771.7C62.6,772.3 58.1,773.0 55.7,772.1C53.4,771.3 51.7,768.3 51.0,766.3C50.3,764.4 50.1,761.4 51.5,760.6C52.8,759.8 56.5,760.9 58.8,761.4C61.2,761.9 63.5,762.2 65.4,763.3C67.3,764.5 70.2,767.0 70.1,768.4Z" fill="url(#g3)" stroke="#121212" stroke-opacity="0.75" stroke-width="1.6"/>
<path d="M511.9,804.0C511.9,805.7 508.7,809.4 506.6,811.0C504.4,812.6 502.1,813.4 498.9,813.3C495.7,813.3 489.3,811.9 487.4,810.7C485.4,809.4 486.4,807.4 487.4,805.8C488.3,804.1 489.8,801.4 492.9,800.5C496.1,799.7 503.0,800.2 506.2,800.7C509.3,801.3 511.8,802.3 511.9,804.0Z" fill="url(#g3)" stroke="#121212" stroke-opacity="0.75" stroke-width="1.6"/>
<path d="M763.8,751.3C763.8,752.5 764.9,753.4 762.6,753.5C760.2,753.6 754.1,753.1 749.9,752.1C745.7,751.1 738.7,748.8 737.3,747.5C735.9,746.2 739.6,745.0 741.6,744.5C743.6,743.9 745.7,743.8 749.2,744.2C752.7,744.6 760.3,745.6 762.7,746.8C765.1,748.0 763.8,750.2 763.8,751.3Z" fill="url(#g1)" stroke="#121212" stroke-opacity="0.75" stroke-width="1.6"/>
<path d="M852.6,800.2C852.2,801.8 849.9,803.4 847.8,803.8C845.7,804.3 841.7,803.7 840.2,802.9C838.8,802.0 839.3,800.7 839.1,798.7C838.8,796.7 837.8,792.7 838.7,791.0C839.6,789.3 842.6,788.0 844.5,788.4C846.5,788.9 849.2,791.8 850.5,793.7C851.9,795.7 853.1,798.5 852.6,800.2Z" fill="url(#g1)" stroke="#121212" stroke-opacity="0.75" stroke-width="1.6"/>
<path d="M776.4,799.2C776.7,801.4 776.6,803.5 774.5,804.7C772.3,805.9 766.4,806.9 763.6,806.7C760.8,806.5 758.8,805.3 757.6,803.7C756.5,802.2 755.8,799.3 756.7,797.4C757.7,795.4 760.7,793.0 763.4,792.1C766.0,791.1 770.6,790.5 772.8,791.7C774.9,792.9 776.1,797.1 776.4,799.2Z" fill="url(#g3)" stroke="#121212" stroke-opacity="0.75" stroke-width="1.6"/>
<path d="M146.6,781.7C147.0,783.0 147.9,784.8 145.4,785.6C142.9,786.5 134.7,787.0 131.5,786.6C128.2,786.3 126.9,784.8 126.0,783.7C125.1,782.5 124.9,780.5 126.3,779.5C127.6,778.5 131.3,777.6 134.1,777.4C136.8,777.2 140.6,777.5 142.7,778.3C144.8,779.0 146.1,780.5 146.6,781.7Z" fill="url(#g4)" stroke="#121212" stroke-opacity="0.75" stroke-width="1.6"/>
<path d="M159.8,806.4C159.1,810.0 150.9,814.7 147.2,817.2C143.5,819.6 141.8,822.6 137.6,821.0C133.4,819.4 124.4,811.3 122.1,807.5C119.9,803.6 121.2,800.3 124.2,797.8C127.2,795.3 135.5,792.8 140.0,792.5C144.6,792.1 148.1,793.4 151.4,795.8C154.7,798.1 160.5,802.9 159.8,806.4Z" fill="url(#g1)" stroke="#121212" stroke-opacity="0.75" stroke-width="1.6"/>
<path d="M812.5,766.3C813.3,767.7 814.8,768.6 812.6,770.0C810.5,771.4 803.7,774.1 799.9,774.7C796.0,775.3 791.7,775.0 789.7,773.6C787.8,772.3 786.5,768.5 788.0,766.8C789.5,765.1 795.5,764.3 798.8,763.5C802.2,762.7 805.7,761.3 808.0,761.8C810.3,762.2 811.7,764.9 812.5,766.3Z" fill="url(#g2)" stroke="#121212" stroke-opacity="0.75" stroke-width="1.6"/>
<path d="M923.7,749.2C924.4,751.5 921.8,754.5 919.4,756.7C916.9,758.8 912.0,762.2 908.9,762.2C905.9,762.2 902.4,758.7 900.9,756.6C899.3,754.6 898.4,752.7 899.6,750.2C900.7,747.6 905.1,742.4 907.7,741.1C910.3,739.9 912.6,741.3 915.3,742.6C918.0,743.9 923.1,746.8 923.7,749.2Z" fill="url(#g3)" stroke="#121212" stroke-opacity="0.75" stroke-width="1.6"/>
<path d="M480.2,764.4C479.6,765.7 478.8,767.7 477.0,768.3C475.3,768.8 471.7,768.4 469.8,767.7C468.0,767.1 466.8,765.7 466.0,764.5C465.2,763.3 464.1,761.7 464.9,760.6C465.6,759.4 467.8,757.8 470.4,757.8C473.0,757.8 478.7,759.5 480.4,760.6C482.0,761.7 480.7,763.1 480.2,764.4Z" fill="url(#g2)" stroke="#121212" stroke-opacity="0.75" stroke-width="1.6"/>
<path d="M749.4,798.1C750.1,801.1 749.1,805.5 745.8,807.2C742.5,808.9 734.3,809.0 729.5,808.3C724.8,807.6 719.3,805.4 717.0,802.9C714.8,800.4 714.6,795.7 716.2,793.3C717.8,790.9 722.4,789.3 726.6,788.7C730.8,788.0 737.7,788.0 741.5,789.5C745.3,791.1 748.7,795.2 749.4,798.1Z" fill="url(#g1)" stroke="#121212" stroke-opacity="0.75" stroke-width="1.6"/>
<path d="M1107.5,783.2C1108.0,785.6 1107.9,790.7 1105.8,793.2C1103.6,795.7 1097.8,797.7 1094.6,798.1C1091.5,798.6 1088.5,797.8 1086.9,796.0C1085.3,794.3 1084.3,790.6 1084.9,787.7C1085.6,784.8 1087.9,780.2 1090.8,778.6C1093.7,777.0 1099.6,777.6 1102.4,778.3C1105.1,779.1 1106.9,780.7 1107.5,783.2Z" fill="url(#g4)" stroke="#121212" stroke-opacity="0.75" stroke-width="1.6"/>
<path d="M392.0,783.5C392.0,785.7 391.1,788.5 388.4,789.0C385.7,789.6 378.9,788.5 375.9,787.1C372.8,785.6 370.4,782.3 370.0,780.4C369.6,778.6 371.7,777.3 373.6,776.0C375.5,774.7 378.9,772.8 381.4,772.8C383.9,772.8 386.8,774.4 388.5,776.2C390.3,777.9 392.0,781.4 392.0,783.5Z" fill="url(#g3)" stroke="#121212" stroke-opacity="0.75" stroke-width="1.6"/>
<path d="M1025.1,779.2C1025.1,781.2 1021.0,784.8 1017.7,786.3C1014.4,787.7 1008.4,788.0 1005.3,788.0C1002.2,788.0 1000.0,787.8 999.0,786.3C997.9,784.9 997.8,781.4 998.9,779.3C1000.1,777.2 1002.6,774.7 1005.7,773.8C1008.8,773.0 1014.4,773.3 1017.6,774.2C1020.8,775.1 1025.1,777.2 1025.1,779.2Z" fill="url(#g5)" stroke="#121212" stroke-opacity="0.75" stroke-width="1.6"/>
<path d="M1120.1,813.9C1119.2,816.1 1114.9,818.2 1111.0,818.6C1107.1,818.9 1100.7,817.6 1096.7,816.0C1092.6,814.4 1087.4,811.3 1086.6,809.1C1085.8,806.9 1089.3,804.2 1092.0,802.6C1094.8,801.1 1099.2,799.1 1103.3,799.5C1107.4,800.0 1113.8,802.8 1116.6,805.2C1119.4,807.6 1121.0,811.6 1120.1,813.9Z" fill="url(#g1)" stroke="#121212" stroke-opacity="0.75" stroke-width="1.6"/>
<path d="M602.2,775.3C602.5,776.8 602.4,779.7 600.7,780.7C598.9,781.6 594.2,781.1 591.6,780.8C589.0,780.5 586.1,780.3 585.2,778.9C584.3,777.5 585.1,773.7 586.2,772.4C587.3,771.0 589.7,771.1 591.8,770.9C593.9,770.8 597.2,770.6 598.9,771.3C600.6,772.1 601.9,773.7 602.2,775.3Z" fill="url(#g1)" stroke="#121212" stroke-opacity="0.75" stroke-width="1.6"/>
<path d="M1125.2,752.7C1125.1,756.5 1125.1,762.8 1123.8,764.8C1122.4,766.9 1118.6,765.7 1117.0,765.0C1115.4,764.2 1114.7,762.6 1114.2,760.2C1113.7,757.9 1113.3,754.1 1113.9,751.1C1114.5,748.1 1116.1,743.8 1117.8,742.3C1119.5,740.8 1122.8,740.5 1124.0,742.3C1125.2,744.0 1125.2,749.0 1125.2,752.7Z" fill="url(#g5)" stroke="#121212" stroke-opacity="0.75" stroke-width="1.6"/>
<path d="M379.4,799.8C379.3,800.7 380.4,802.3 378.0,802.7C375.6,803.0 368.4,802.1 365.2,801.7C361.9,801.3 359.4,800.9 358.5,800.1C357.6,799.4 358.7,798.1 359.8,797.4C360.9,796.7 362.1,795.9 365.3,795.9C368.5,796.0 376.6,796.8 379.0,797.5C381.3,798.1 379.6,798.9 379.4,799.8Z" fill="url(#g1)" stroke="#121212" stroke-opacity="0.75" stroke-width="1.6"/>
<path d="M263.5,761.7C263.4,762.9 260.7,764.8 257.7,764.9C254.6,765.0 248.8,763.5 245.5,762.3C242.1,761.2 239.3,759.3 237.5,757.9C235.7,756.4 233.0,754.2 234.4,753.6C235.9,752.9 242.1,753.5 246.1,754.1C250.2,754.8 255.7,756.1 258.6,757.4C261.5,758.6 263.7,760.4 263.5,761.7Z" fill="url(#g3)" stroke="#121212" stroke-opacity="0.75" stroke-width="1.6"/>
<path d="M317.6,779.0C317.7,780.2 317.2,782.7 315.6,783.9C314.0,785.2 310.5,786.2 307.9,786.5C305.4,786.8 301.7,786.5 300.4,785.8C299.1,785.2 299.3,784.3 300.4,782.7C301.4,781.1 304.4,777.2 306.9,776.2C309.4,775.2 313.3,776.2 315.1,776.7C316.9,777.1 317.5,777.8 317.6,779.0Z" fill="url(#g5)" stroke="#121212" stroke-opacity="0.75" stroke-width="1.6"/>
<path d="M1213.3,753.9C1214.0,756.3 1213.2,761.2 1211.2,763.8C1209.2,766.3 1204.2,768.6 1201.1,769.1C1197.9,769.6 1194.5,768.1 1192.3,766.7C1190.2,765.4 1187.4,763.8 1188.0,760.9C1188.7,758.0 1192.9,751.1 1196.1,749.1C1199.3,747.1 1204.5,748.0 1207.4,748.8C1210.3,749.6 1212.7,751.4 1213.3,753.9Z" fill="url(#g2)" stroke="#121212" stroke-opacity="0.75" stroke-width="1.6"/>
<path d="M549.7,776.5C548.9,778.2 548.6,780.3 546.1,780.4C543.6,780.6 537.3,778.5 534.5,777.4C531.7,776.3 530.0,775.2 529.4,773.5C528.7,771.9 529.0,768.5 530.3,767.3C531.7,766.1 534.1,765.7 537.5,766.2C540.9,766.7 548.7,768.4 550.8,770.1C552.8,771.8 550.4,774.8 549.7,776.5Z" fill="url(#g5)" stroke="#121212" stroke-opacity="0.75" stroke-width="1.6"/>
<path d="M358.2,760.7C358.8,763.4 357.9,767.0 354.5,768.3C351.2,769.5 341.9,769.0 338.2,768.2C334.5,767.5 333.8,765.7 332.4,763.7C331.0,761.6 328.1,758.3 329.6,755.9C331.2,753.6 338.2,750.1 341.8,749.5C345.4,748.9 348.5,750.2 351.2,752.1C354.0,753.9 357.7,758.0 358.2,760.7Z" fill="url(#g2)" stroke="#121212" stroke-opacity="0.75" stroke-width="1.6"/>
<path d="M1016.7,791.1C1016.9,792.5 1013.1,795.0 1009.9,795.4C1006.7,795.9 1001.3,794.5 997.4,793.8C993.6,793.1 988.5,792.6 986.9,791.3C985.3,790.1 985.8,787.3 987.9,786.4C990.0,785.6 995.8,786.0 999.3,786.1C1002.7,786.2 1005.7,786.2 1008.6,787.1C1011.5,787.9 1016.5,789.7 1016.7,791.1Z" fill="url(#g1)" stroke="#121212" stroke-opacity="0.75" stroke-width="1.6"/>
<path d="M1039.5,807.6C1039.3,808.8 1036.4,809.3 1034.0,809.7C1031.5,810.0 1027.8,810.3 1024.6,809.9C1021.5,809.5 1016.5,808.2 1015.1,807.3C1013.7,806.3 1014.9,804.9 1016.4,804.2C1017.8,803.4 1020.7,803.1 1023.8,802.8C1026.9,802.6 1032.2,801.9 1034.9,802.7C1037.5,803.5 1039.6,806.4 1039.5,807.6Z" fill="url(#g4)" stroke="#121212" stroke-opacity="0.75" stroke-width="1.6"/>
<path d="M646.8,795.8C646.3,796.9 643.0,798.0 640.7,798.3C638.4,798.6 635.5,798.4 633.0,797.6C630.6,796.8 627.6,794.8 626.0,793.5C624.4,792.2 622.3,790.6 623.4,789.8C624.6,789.0 629.4,788.6 632.8,788.9C636.1,789.2 641.2,790.5 643.5,791.6C645.9,792.8 647.3,794.7 646.8,795.8Z" fill="url(#g2)" stroke="#121212" stroke-opacity="0.75" stroke-width="1.6"/>
<path d="M927.2,768.2C926.7,771.6 922.1,775.1 919.5,776.4C917.0,777.7 914.0,777.5 911.9,776.0C909.7,774.5 907.5,770.8 906.8,767.5C906.1,764.1 906.1,758.3 907.9,756.0C909.6,753.7 914.9,753.9 917.4,753.9C919.9,753.8 921.2,753.4 922.8,755.8C924.4,758.2 927.8,764.8 927.2,768.2Z" fill="url(#g2)" stroke="#121212" stroke-opacity="0.75" stroke-width="1.6"/>
<path d="M530.8,801.1C530.7,802.7 528.1,804.3 525.5,805.6C523.0,806.9 518.2,809.8 515.2,809.2C512.2,808.6 508.6,804.2 507.3,802.0C506.0,799.9 506.0,797.8 507.5,796.4C508.9,795.0 512.9,793.7 515.9,793.6C519.0,793.6 523.4,794.8 525.9,796.0C528.3,797.3 530.8,799.5 530.8,801.1Z" fill="url(#g2)" stroke="#121212" stroke-opacity="0.75" stroke-width="1.6"/>
<path d="M271.4,765.6C271.5,766.7 269.1,768.5 267.4,769.0C265.7,769.5 263.1,768.9 261.1,768.6C259.1,768.2 256.0,767.7 255.1,766.8C254.3,766.0 255.2,764.5 255.9,763.6C256.6,762.6 257.3,761.3 259.2,761.1C261.0,760.9 264.9,761.6 266.9,762.4C269.0,763.1 271.3,764.5 271.4,765.6Z" fill="url(#g2)" stroke="#121212" stroke-opacity="0.75" stroke-width="1.6"/>
<path d="M923.3,762.7C922.3,765.0 920.9,768.6 919.0,769.5C917.0,770.4 913.7,769.4 911.8,768.2C909.8,767.1 908.0,764.7 907.2,762.5C906.4,760.2 905.4,756.4 907.0,754.8C908.5,753.2 913.8,752.6 916.8,752.8C919.7,752.9 923.7,754.0 924.8,755.6C925.9,757.3 924.2,760.4 923.3,762.7Z" fill="url(#g2)" stroke="#121212" stroke-opacity="0.75" stroke-width="1.6"/>
<path d="M598.8,797.1C598.8,798.7 594.3,802.1 591.3,803.8C588.4,805.5 584.6,806.8 581.2,807.3C577.8,807.8 573.0,808.0 570.9,806.7C568.8,805.4 567.7,801.9 568.8,799.7C569.8,797.5 573.4,794.6 577.1,793.7C580.9,792.8 587.6,793.9 591.2,794.4C594.8,795.0 598.8,795.6 598.8,797.1Z" fill="url(#g1)" stroke="#121212" stroke-opacity="0.75" stroke-width="1.6"/>
<path d="M1063.9,752.3C1063.1,754.5 1059.3,755.4 1055.0,756.3C1050.7,757.1 1043.0,758.7 1038.2,757.6C1033.4,756.4 1027.9,751.6 1026.3,749.4C1024.6,747.2 1025.6,745.9 1028.3,744.2C1030.9,742.5 1036.8,739.7 1042.1,739.4C1047.3,739.2 1056.1,740.7 1059.7,742.9C1063.4,745.0 1064.7,750.1 1063.9,752.3Z" fill="url(#g5)" stroke="#121212" stroke-opacity="0.75" stroke-width="1.6"/>
<path d="M414.3,777.6C414.6,779.7 413.9,783.9 411.7,785.6C409.5,787.3 404.2,788.2 400.9,788.0C397.6,787.9 393.6,786.6 391.9,784.6C390.2,782.6 389.8,778.3 390.6,776.0C391.5,773.6 394.0,771.2 397.2,770.7C400.4,770.1 407.1,771.6 410.0,772.7C412.8,773.9 414.0,775.4 414.3,777.6Z" fill="url(#g5)" stroke="#121212" stroke-opacity="0.75" stroke-width="1.6"/>
<path d="M308.3,795.0C307.6,796.9 303.7,798.4 301.1,799.2C298.5,800.1 295.0,801.3 292.6,800.2C290.1,799.2 287.3,795.0 286.4,793.0C285.5,790.9 285.8,789.2 287.2,787.9C288.6,786.7 291.7,785.5 294.7,785.5C297.6,785.5 302.7,786.2 304.9,787.8C307.2,789.4 308.9,793.1 308.3,795.0Z" fill="url(#g3)" stroke="#121212" stroke-opacity="0.75" stroke-width="1.6"/>
<path d="M1121.8,807.1C1121.9,809.3 1119.3,812.4 1115.7,813.9C1112.2,815.4 1104.3,816.7 1100.5,816.2C1096.7,815.7 1094.2,812.6 1093.0,811.0C1091.9,809.4 1092.0,808.3 1093.7,806.5C1095.3,804.7 1099.2,801.2 1102.8,800.3C1106.3,799.3 1111.8,799.6 1115.0,800.7C1118.1,801.8 1121.6,804.9 1121.8,807.1Z" fill="url(#g2)" stroke="#121212" stroke-opacity="0.75" stroke-width="1.6"/>
<path d="M501.2,774.6C501.1,775.8 500.9,777.0 499.3,777.9C497.8,778.9 494.2,780.3 492.0,780.3C489.9,780.2 487.4,779.1 486.4,777.7C485.3,776.3 484.6,773.2 485.8,771.8C487.0,770.4 491.3,769.5 493.8,769.4C496.2,769.2 499.1,770.1 500.4,771.0C501.6,771.9 501.4,773.4 501.2,774.6Z" fill="url(#g2)" stroke="#121212" stroke-opacity="0.75" stroke-width="1.6"/>
<path d="M617.0,756.3C617.4,758.1 618.3,762.3 617.5,763.8C616.7,765.2 614.1,765.0 612.3,765.1C610.5,765.2 607.5,765.5 606.5,764.3C605.4,763.2 605.4,760.0 605.9,758.2C606.4,756.5 607.8,754.7 609.3,753.8C610.8,753.0 613.7,752.8 614.9,753.2C616.2,753.6 616.5,754.5 617.0,756.3Z" fill="url(#g1)" stroke="#121212" stroke-opacity="0.75" stroke-width="1.6"/>
<path d="M653.3,745.0C653.8,746.9 651.7,751.4 648.1,753.4C644.4,755.4 635.8,756.9 631.5,757.1C627.2,757.2 623.7,755.8 622.3,754.4C621.0,753.1 622.0,751.2 623.5,749.0C625.1,746.7 628.0,742.4 631.6,741.2C635.1,740.1 641.0,741.6 644.6,742.2C648.2,742.8 652.7,743.1 653.3,745.0Z" fill="url(#g3)" stroke="#121212" stroke-opacity="0.75" stroke-width="1.6"/>
<path d="M641.9,769.8C641.4,771.6 637.5,773.7 635.5,774.9C633.5,776.0 632.0,777.2 629.7,776.8C627.3,776.5 622.5,774.2 621.3,772.7C620.1,771.1 620.8,768.9 622.2,767.4C623.6,765.9 626.9,764.0 629.6,763.5C632.4,763.0 636.5,763.4 638.6,764.5C640.6,765.5 642.4,768.1 641.9,769.8Z" fill="url(#g2)" stroke="#121212" stroke-opacity="0.75" stroke-width="1.6"/>
<path d="M517.9,785.9C517.7,787.8 518.0,790.6 516.4,791.2C514.8,791.9 509.9,790.3 508.0,789.7C506.2,789.0 505.3,788.8 505.3,787.4C505.3,785.9 506.8,782.3 508.1,781.0C509.4,779.7 511.4,779.6 513.0,779.5C514.5,779.4 516.8,779.2 517.6,780.2C518.4,781.3 518.1,784.1 517.9,785.9Z" fill="url(#g4)" stroke="#121212" stroke-opacity="0.75" stroke-width="1.6"/>
<path d="M944.2,761.5C944.8,764.1 942.8,769.0 940.2,770.7C937.6,772.5 932.0,772.7 928.7,772.0C925.3,771.3 921.4,768.6 920.1,766.3C918.8,764.0 919.2,760.3 920.9,758.1C922.6,755.9 927.8,753.4 930.5,753.0C933.1,752.5 934.5,753.9 936.8,755.3C939.0,756.8 943.7,759.0 944.2,761.5Z" fill="url(#g2)" stroke="#121212" stroke-opacity="0.75" stroke-width="1.6"/>
<path d="M1066.9,797.6C1067.6,799.7 1065.5,804.3 1062.8,806.6C1060.0,808.8 1054.4,810.1 1050.2,811.0C1046.0,811.9 1039.7,813.3 1037.6,812.0C1035.5,810.7 1036.5,805.6 1037.6,803.2C1038.7,800.8 1040.6,799.3 1044.2,797.8C1047.7,796.3 1055.1,794.1 1058.9,794.1C1062.6,794.0 1066.3,795.5 1066.9,797.6Z" fill="url(#g3)" stroke="#121212" stroke-opacity="0.75" stroke-width="1.6"/>
<path d="M931.5,795.2C931.8,798.3 930.2,800.4 927.6,802.5C925.0,804.7 919.6,808.4 915.8,808.1C912.0,807.9 907.0,803.9 905.0,800.8C902.9,797.8 902.1,792.5 903.5,789.6C904.9,786.7 909.7,784.5 913.4,783.5C917.1,782.5 922.6,781.7 925.6,783.6C928.6,785.5 931.1,792.0 931.5,795.2Z" fill="url(#g5)" stroke="#121212" stroke-opacity="0.75" stroke-width="1.6"/>
<path d="M90.2,796.3C89.9,798.2 84.9,799.1 81.8,799.1C78.8,799.1 75.1,797.8 72.0,796.3C68.9,794.8 64.7,792.5 63.0,790.2C61.3,787.9 60.3,783.8 62.0,782.5C63.6,781.1 69.3,781.4 72.9,782.2C76.5,783.0 80.9,784.9 83.8,787.3C86.6,789.6 90.5,794.3 90.2,796.3Z" fill="url(#g3)" stroke="#121212" stroke-opacity="0.75" stroke-width="1.6"/>
<path d="M66.3,788.6C65.6,790.4 62.3,791.3 59.1,791.8C55.9,792.2 50.3,792.7 47.1,791.2C43.8,789.6 40.7,784.7 39.5,782.4C38.3,780.0 37.8,778.3 39.9,777.3C42.0,776.2 48.4,775.6 52.3,776.2C56.3,776.8 61.1,778.7 63.5,780.8C65.8,782.9 67.1,786.8 66.3,788.6Z" fill="url(#g1)" stroke="#121212" stroke-opacity="0.75" stroke-width="1.6"/>
<path d="M1047.6,780.5C1047.7,782.2 1047.1,784.0 1045.5,785.5C1043.9,787.1 1040.6,789.5 1038.3,789.7C1035.9,789.9 1032.4,788.5 1031.2,786.8C1030.0,785.1 1030.4,781.5 1031.2,779.6C1032.0,777.6 1033.6,775.7 1035.9,775.0C1038.1,774.2 1042.8,774.3 1044.7,775.2C1046.7,776.1 1047.4,778.8 1047.6,780.5Z" fill="url(#g4)" stroke="#121212" stroke-opacity="0.75" stroke-width="1.6"/>
<path d="M294.8,803.8C295.4,805.1 293.9,807.0 291.9,808.6C289.9,810.1 286.4,812.3 282.8,813.1C279.3,813.8 272.6,814.0 270.6,813.2C268.7,812.4 269.4,809.9 271.1,808.1C272.8,806.3 278.0,803.6 280.8,802.3C283.6,801.1 285.8,800.4 288.1,800.7C290.4,800.9 294.2,802.5 294.8,803.8Z" fill="url(#g4)" stroke="#121212" stroke-opacity="0.75" stroke-width="1.6"/>
<path d="M324.7,768.2C325.1,769.6 323.0,772.7 321.0,774.1C319.1,775.4 315.4,776.0 313.0,776.3C310.7,776.6 308.7,776.3 306.9,776.0C305.2,775.6 302.1,775.6 302.5,774.4C303.0,773.1 307.2,769.7 309.9,768.3C312.6,766.9 316.5,765.9 318.9,765.9C321.4,765.9 324.4,766.8 324.7,768.2Z" fill="url(#g3)" stroke="#121212" stroke-opacity="0.75" stroke-width="1.6"/>
<path d="M917.8,761.6C917.9,763.8 913.1,767.2 910.8,769.1C908.6,771.0 907.1,772.9 904.3,772.8C901.6,772.7 895.6,770.7 894.2,768.6C892.8,766.5 894.9,762.4 895.9,760.4C896.8,758.3 897.7,757.1 900.1,756.3C902.5,755.6 907.3,754.9 910.3,755.8C913.2,756.7 917.8,759.4 917.8,761.6Z" fill="url(#g1)" stroke="#121212" stroke-opacity="0.75" stroke-width="1.6"/>
<path d="M341.9,755.1C342.6,757.6 342.1,759.8 341.3,761.1C340.5,762.5 338.9,763.5 337.2,763.3C335.4,763.2 332.1,761.9 330.9,760.3C329.7,758.7 329.5,755.5 329.9,753.5C330.3,751.6 332.1,749.7 333.3,748.4C334.6,747.1 335.9,744.8 337.4,745.9C338.8,747.0 341.3,752.5 341.9,755.1Z" fill="url(#g1)" stroke="#121212" stroke-opacity="0.75" stroke-width="1.6"/>
<path d="M806.8,786.3C806.0,788.4 802.1,790.0 798.8,790.2C795.5,790.4 790.7,788.9 787.0,787.2C783.4,785.6 777.8,782.5 776.8,780.4C775.9,778.3 779.2,775.7 781.3,774.5C783.4,773.2 785.6,772.4 789.4,772.9C793.2,773.4 801.2,775.3 804.1,777.5C807.0,779.7 807.7,784.2 806.8,786.3Z" fill="url(#g3)" stroke="#121212" stroke-opacity="0.75" stroke-width="1.6"/>
<path d="M345.8,793.0C345.8,794.3 344.1,797.0 341.9,798.5C339.7,799.9 335.5,801.0 332.4,801.8C329.4,802.5 325.1,803.3 323.5,802.7C321.9,802.0 321.6,799.5 322.9,797.8C324.3,796.2 328.5,794.0 331.7,792.7C334.8,791.5 339.5,790.1 341.8,790.1C344.2,790.2 345.7,791.6 345.8,793.0Z" fill="url(#g1)" stroke="#121212" stroke-opacity="0.75" stroke-width="1.6"/>
<path d="M830.6,802.4C829.9,803.9 825.5,804.5 822.7,804.9C820.0,805.3 816.8,805.8 814.2,804.9C811.6,804.0 808.0,801.4 807.1,799.7C806.2,797.9 806.9,795.5 808.6,794.5C810.2,793.4 813.8,793.1 817.0,793.4C820.1,793.6 825.2,794.3 827.4,795.8C829.7,797.3 831.4,800.9 830.6,802.4Z" fill="url(#g2)" stroke="#121212" stroke-opacity="0.75" stroke-width="1.6"/>
<path d="M176.1,749.1C176.7,751.6 175.9,755.6 173.8,757.8C171.7,759.9 167.1,761.7 163.7,762.1C160.3,762.5 154.8,761.5 153.3,759.9C151.7,758.3 152.8,755.0 154.4,752.5C156.0,750.1 160.1,746.9 162.7,745.3C165.4,743.7 168.0,742.3 170.3,742.9C172.5,743.5 175.5,746.6 176.1,749.1Z" fill="url(#g5)" stroke="#121212" stroke-opacity="0.75" stroke-width="1.6"/>
<path d="M203.8,760.3C203.5,762.8 201.6,766.0 199.7,767.9C197.8,769.7 194.9,771.6 192.3,771.2C189.6,770.9 185.5,767.9 183.9,765.6C182.3,763.3 181.7,759.3 182.7,757.5C183.7,755.6 186.9,755.1 189.9,754.4C193.0,753.7 198.8,752.2 201.1,753.2C203.4,754.1 204.0,757.8 203.8,760.3Z" fill="url(#g1)" stroke="#121212" stroke-opacity="0.75" stroke-width="1.6"/>
<path d="M739.8,757.8C739.6,759.2 736.2,760.5 733.3,760.8C730.3,761.2 725.8,760.7 721.9,760.0C718.0,759.2 711.9,757.6 709.9,756.3C707.8,754.9 707.4,752.9 709.8,751.8C712.1,750.7 719.7,749.6 723.9,749.7C728.1,749.7 732.1,750.9 734.8,752.2C737.4,753.6 740.1,756.3 739.8,757.8Z" fill="url(#g1)" stroke="#121212" stroke-opacity="0.75" stroke-width="1.6"/>
<path d="M594.2,804.0C593.4,806.7 589.3,807.7 584.8,809.0C580.2,810.4 571.3,813.8 567.0,812.3C562.8,810.9 560.6,803.8 559.4,800.6C558.2,797.3 557.0,795.5 559.7,792.9C562.4,790.3 570.7,785.2 575.6,785.1C580.6,785.1 586.4,789.4 589.5,792.5C592.6,795.7 595.0,801.2 594.2,804.0Z" fill="url(#g4)" stroke="#121212" stroke-opacity="0.75" stroke-width="1.6"/>
<path d="M1203.7,776.4C1203.2,778.9 1198.0,783.1 1195.8,784.8C1193.5,786.5 1192.8,787.4 1190.0,786.6C1187.2,785.8 1180.5,782.8 1178.9,780.3C1177.4,777.7 1178.8,773.3 1180.7,771.2C1182.6,769.2 1187.4,768.3 1190.4,768.1C1193.4,767.9 1196.5,768.7 1198.8,770.1C1201.0,771.5 1204.2,773.9 1203.7,776.4Z" fill="url(#g2)" stroke="#121212" stroke-opacity="0.75" stroke-width="1.6"/>
<path d="M258.7,765.4C258.8,767.7 255.4,770.0 253.1,771.6C250.9,773.1 247.6,775.2 245.5,774.6C243.4,774.0 241.7,770.2 240.3,768.1C238.9,765.9 236.4,763.8 237.3,761.9C238.1,760.0 242.8,757.3 245.4,756.6C247.9,755.9 250.4,756.3 252.7,757.8C254.9,759.2 258.7,763.1 258.7,765.4Z" fill="url(#g1)" stroke="#121212" stroke-opacity="0.75" stroke-width="1.6"/>
<path d="M793.7,784.8C793.8,787.5 794.0,791.0 791.9,793.1C789.8,795.1 784.3,797.6 781.1,797.1C777.9,796.6 773.9,792.7 772.6,790.2C771.2,787.6 771.4,784.1 772.8,781.8C774.2,779.5 778.0,777.3 781.0,776.5C784.0,775.7 788.9,775.4 791.0,776.8C793.1,778.1 793.5,782.1 793.7,784.8Z" fill="url(#g1)" stroke="#121212" stroke-opacity="0.75" stroke-width="1.6"/>
<path d="M985.5,778.9C985.9,782.7 984.4,790.1 981.3,792.8C978.3,795.6 971.3,796.5 967.1,795.5C962.9,794.4 957.7,790.1 956.0,786.8C954.3,783.4 955.5,778.6 956.9,775.3C958.4,772.0 961.0,768.1 964.6,767.2C968.2,766.3 975.3,768.0 978.8,769.9C982.2,771.9 985.0,775.0 985.5,778.9Z" fill="url(#g3)" stroke="#121212" stroke-opacity="0.75" stroke-width="1.6"/>
<path d="M389.7,781.5C390.2,783.0 392.3,785.7 390.4,787.0C388.4,788.3 381.2,788.9 378.0,789.2C374.8,789.4 372.2,789.4 371.0,788.3C369.9,787.2 370.4,784.1 371.1,782.5C371.9,780.9 373.0,779.4 375.7,778.7C378.4,778.0 384.8,777.8 387.1,778.3C389.4,778.7 389.1,780.0 389.7,781.5Z" fill="url(#g1)" stroke="#121212" stroke-opacity="0.75" stroke-width="1.6"/>
<path d="M348.0,757.4C348.0,758.7 346.9,760.5 345.4,760.9C343.9,761.3 340.4,760.5 339.0,759.8C337.5,759.1 337.1,758.1 336.7,756.8C336.3,755.5 336.0,753.1 336.7,752.0C337.4,750.9 339.5,750.1 341.0,750.2C342.5,750.3 344.7,751.5 345.8,752.7C347.0,753.9 348.1,756.0 348.0,757.4Z" fill="url(#g2)" stroke="#121212" stroke-opacity="0.75" stroke-width="1.6"/>
<path d="M972.4,785.2C972.1,786.3 967.4,787.3 964.4,787.4C961.4,787.5 957.9,786.7 954.4,785.9C950.8,785.1 944.8,783.6 942.9,782.5C941.0,781.4 941.1,780.1 942.9,779.4C944.7,778.7 949.7,778.1 953.6,778.4C957.5,778.7 963.1,779.9 966.3,781.0C969.4,782.1 972.7,784.2 972.4,785.2Z" fill="url(#g1)" stroke="#121212" stroke-opacity="0.75" stroke-width="1.6"/>
<path d="M371.8,791.8C372.3,794.2 372.5,796.4 371.6,798.1C370.7,799.9 368.1,802.7 366.5,802.4C364.9,802.0 363.0,798.2 361.9,795.9C360.8,793.6 359.4,790.6 359.8,788.5C360.1,786.4 362.5,784.0 364.0,783.2C365.6,782.4 367.7,782.0 369.0,783.4C370.2,784.9 371.4,789.3 371.8,791.8Z" fill="url(#g3)" stroke="#121212" stroke-opacity="0.75" stroke-width="1.6"/>
<path d="M-4.5,758.8C-4.0,760.3 -7.3,762.2 -9.7,763.6C-12.1,765.0 -15.9,767.0 -19.0,767.1C-22.2,767.2 -27.1,765.5 -28.9,764.3C-30.6,763.0 -30.5,761.2 -29.4,759.5C-28.2,757.9 -24.8,755.1 -22.1,754.2C-19.3,753.3 -15.7,753.6 -12.8,754.3C-9.9,755.1 -5.0,757.2 -4.5,758.8Z" fill="url(#g2)" stroke="#121212" stroke-opacity="0.75" stroke-width="1.6"/>
<path d="M552.3,777.3C553.4,778.6 552.9,779.7 550.7,781.2C548.6,782.8 542.8,786.0 539.4,786.5C536.0,786.9 532.2,785.5 530.6,784.0C528.9,782.5 528.1,779.5 529.3,777.7C530.5,775.9 535.4,774.2 537.9,773.4C540.4,772.7 541.8,772.6 544.2,773.2C546.6,773.9 551.2,776.0 552.3,777.3Z" fill="url(#g1)" stroke="#121212" stroke-opacity="0.75" stroke-width="1.6"/>
<path d="M155.9,792.5C156.4,794.3 154.6,797.8 151.4,799.9C148.3,802.1 141.2,804.6 136.9,805.4C132.7,806.3 127.7,806.2 125.9,805.1C124.1,804.0 124.8,800.8 126.3,798.8C127.9,796.8 131.7,794.7 135.5,793.1C139.2,791.6 145.3,789.4 148.7,789.3C152.2,789.2 155.5,790.8 155.9,792.5Z" fill="url(#g5)" stroke="#121212" stroke-opacity="0.75" stroke-width="1.6"/>
<path d="M362.4,760.3C362.2,762.3 360.1,765.2 357.7,766.0C355.3,766.8 350.9,766.3 348.1,765.4C345.4,764.5 342.3,762.0 341.1,760.5C340.0,759.0 339.9,757.6 341.3,756.2C342.7,754.9 346.7,752.6 349.6,752.3C352.5,752.0 356.8,753.1 358.9,754.4C361.0,755.8 362.6,758.4 362.4,760.3Z" fill="url(#g1)" stroke="#121212" stroke-opacity="0.75" stroke-width="1.6"/>
<path d="M318.2,791.7C319.0,793.4 319.3,794.9 316.1,795.8C312.9,796.8 303.3,798.0 299.0,797.5C294.8,797.0 292.6,794.3 290.6,792.8C288.5,791.4 284.8,790.2 286.7,788.7C288.5,787.3 297.5,784.6 301.6,784.1C305.7,783.6 308.4,784.6 311.2,785.8C314.0,787.1 317.4,790.0 318.2,791.7Z" fill="url(#g1)" stroke="#121212" stroke-opacity="0.75" stroke-width="1.6"/>
<path d="M150.7,748.3C151.5,749.9 151.7,752.0 149.6,753.5C147.4,754.9 140.5,756.9 137.8,757.1C135.2,757.3 134.7,755.6 133.5,754.4C132.4,753.3 130.2,751.9 130.9,750.2C131.6,748.5 135.3,745.4 137.6,744.3C139.9,743.2 142.6,743.1 144.8,743.8C147.0,744.4 149.9,746.7 150.7,748.3Z" fill="url(#g2)" stroke="#121212" stroke-opacity="0.75" stroke-width="1.6"/>
<path d="M837.9,795.7C838.3,798.5 836.5,804.7 835.1,806.7C833.7,808.7 831.6,808.8 829.8,807.8C828.0,806.9 825.6,803.1 824.4,801.2C823.2,799.3 821.7,798.3 822.5,796.5C823.2,794.7 827.2,791.4 829.0,790.4C830.7,789.3 831.5,789.4 833.0,790.3C834.5,791.2 837.6,793.0 837.9,795.7Z" fill="url(#g1)" stroke="#121212" stroke-opacity="0.75" stroke-width="1.6"/>
<path d="M969.6,784.1C970.1,784.9 971.9,786.0 969.4,786.3C966.9,786.7 958.0,786.5 954.6,786.1C951.3,785.7 950.4,785.1 949.1,784.1C947.8,783.2 945.2,781.1 946.7,780.4C948.2,779.6 954.9,779.4 958.2,779.6C961.5,779.7 964.8,780.5 966.7,781.3C968.6,782.0 969.2,783.2 969.6,784.1Z" fill="url(#g1)" stroke="#121212" stroke-opacity="0.75" stroke-width="1.6"/>
<path d="M928.0,797.0C928.6,798.2 927.8,801.2 925.0,802.6C922.2,804.0 915.5,805.2 911.3,805.5C907.1,805.9 902.3,805.3 900.1,804.7C897.8,804.0 896.9,803.2 897.7,801.9C898.5,800.6 901.1,797.9 905.0,796.9C908.9,795.9 917.3,795.9 921.1,795.9C925.0,795.9 927.3,795.9 928.0,797.0Z" fill="url(#g2)" stroke="#121212" stroke-opacity="0.75" stroke-width="1.6"/>
<path d="M763.6,755.8C763.5,756.6 760.1,757.6 757.5,758.4C755.0,759.1 751.4,760.2 748.5,760.1C745.6,760.1 742.0,758.8 740.4,757.9C738.7,757.1 737.3,756.1 738.6,755.2C740.0,754.2 745.3,752.7 748.6,752.3C751.8,751.9 755.7,752.5 758.2,753.0C760.7,753.6 763.8,754.9 763.6,755.8Z" fill="url(#g5)" stroke="#121212" stroke-opacity="0.75" stroke-width="1.6"/>
<path d="M709.8,762.7C710.5,764.2 710.6,766.6 708.9,767.8C707.2,769.0 702.7,770.2 699.6,770.0C696.6,769.7 691.5,767.9 690.4,766.4C689.3,764.9 691.4,762.3 693.1,760.9C694.8,759.6 698.5,758.6 700.5,758.2C702.5,757.8 703.5,758.0 705.1,758.7C706.6,759.5 709.2,761.2 709.8,762.7Z" fill="url(#g3)" stroke="#121212" stroke-opacity="0.75" stroke-width="1.6"/>
<path d="M689.9,768.4C690.5,770.1 691.0,773.7 690.2,775.5C689.5,777.3 687.3,779.0 685.3,779.2C683.3,779.3 680.0,777.7 678.4,776.2C676.8,774.8 675.7,772.0 675.8,770.3C675.9,768.5 677.2,766.4 678.9,765.7C680.6,764.9 684.4,765.1 686.2,765.6C688.0,766.1 689.2,766.8 689.9,768.4Z" fill="url(#g3)" stroke="#121212" stroke-opacity="0.75" stroke-width="1.6"/>
<path d="M149.7,768.6C149.3,769.7 147.9,770.7 145.2,771.5C142.6,772.2 137.1,773.5 133.6,773.0C130.0,772.6 125.8,770.1 124.1,768.9C122.3,767.7 121.4,767.0 123.2,765.9C124.9,764.7 130.5,762.3 134.6,762.1C138.7,761.9 145.1,763.7 147.6,764.8C150.1,765.8 150.1,767.4 149.7,768.6Z" fill="url(#g2)" stroke="#121212" stroke-opacity="0.75" stroke-width="1.6"/>
<path d="M368.5,792.2C367.3,794.2 362.9,797.5 359.2,798.3C355.5,799.1 349.9,798.3 346.2,797.0C342.4,795.8 338.2,792.9 336.8,790.8C335.5,788.7 336.2,785.9 338.2,784.5C340.1,783.1 343.8,782.2 348.5,782.5C353.3,782.8 363.3,784.6 366.7,786.2C370.0,787.8 369.8,790.2 368.5,792.2Z" fill="url(#g5)" stroke="#121212" stroke-opacity="0.75" stroke-width="1.6"/>
<path d="M583.5,750.8C584.0,752.7 583.6,755.3 582.3,757.0C580.9,758.7 577.9,760.7 575.3,760.9C572.7,761.1 568.4,760.2 566.8,758.4C565.2,756.6 564.9,752.3 565.6,750.0C566.4,747.7 569.1,745.7 571.4,744.9C573.6,744.1 577.1,744.2 579.1,745.2C581.1,746.2 583.0,748.8 583.5,750.8Z" fill="url(#g4)" stroke="#121212" stroke-opacity="0.75" stroke-width="1.6"/>
<path d="M719.3,761.1C718.9,763.6 717.3,765.9 714.6,767.5C711.9,769.2 705.9,771.9 703.2,771.0C700.5,770.2 699.3,765.2 698.2,762.5C697.1,759.9 695.5,756.8 696.6,755.0C697.6,753.2 701.0,752.4 704.4,752.0C707.8,751.5 714.4,750.8 716.9,752.3C719.4,753.9 719.6,758.6 719.3,761.1Z" fill="url(#g5)" stroke="#121212" stroke-opacity="0.75" stroke-width="1.6"/>
<path d="M876.8,770.5C876.2,772.4 872.7,775.7 870.2,776.5C867.8,777.4 864.6,776.4 862.0,775.5C859.3,774.6 855.5,773.1 854.2,770.9C852.9,768.7 852.2,764.2 854.0,762.4C855.7,760.6 861.4,759.9 864.7,760.3C868.0,760.7 871.9,763.2 873.9,764.9C875.9,766.6 877.4,768.5 876.8,770.5Z" fill="url(#g4)" stroke="#121212" stroke-opacity="0.75" stroke-width="1.6"/>
<path d="M905.8,755.9C905.8,757.3 902.5,758.5 900.0,758.8C897.6,759.1 894.1,758.5 891.3,757.7C888.6,757.0 884.1,755.7 883.4,754.3C882.6,753.0 885.2,750.7 886.7,749.5C888.3,748.2 890.3,746.7 892.5,747.0C894.7,747.2 897.9,749.3 900.1,750.8C902.3,752.3 905.8,754.6 905.8,755.9Z" fill="url(#g3)" stroke="#121212" stroke-opacity="0.75" stroke-width="1.6"/>
<path d="M318.5,786.7C317.6,788.6 313.8,790.4 310.8,791.2C307.7,792.0 303.4,792.5 300.2,791.6C297.0,790.6 292.9,787.7 291.7,785.4C290.5,783.1 291.2,779.5 293.0,778.0C294.8,776.4 298.4,775.8 302.3,776.1C306.2,776.4 313.6,778.0 316.3,779.7C319.0,781.5 319.4,784.7 318.5,786.7Z" fill="url(#g1)" stroke="#121212" stroke-opacity="0.75" stroke-width="1.6"/>
<path d="M565.4,749.6C565.7,752.0 564.8,755.5 563.0,757.0C561.1,758.4 557.6,758.6 554.4,758.5C551.2,758.4 545.8,758.1 544.0,756.4C542.2,754.6 542.6,750.2 543.5,748.1C544.3,745.9 546.3,744.5 549.2,743.6C552.2,742.7 558.5,741.7 561.2,742.7C563.9,743.7 565.1,747.3 565.4,749.6Z" fill="url(#g2)" stroke="#121212" stroke-opacity="0.75" stroke-width="1.6"/>
<path d="M1064.1,809.3C1064.0,810.4 1059.4,809.5 1055.9,809.0C1052.4,808.6 1047.6,808.4 1043.3,806.7C1038.9,805.1 1031.2,800.9 1029.7,799.4C1028.1,797.8 1031.9,797.7 1034.0,797.3C1036.0,796.9 1038.1,796.3 1041.9,797.1C1045.6,798.0 1052.8,800.5 1056.5,802.5C1060.2,804.5 1064.2,808.2 1064.1,809.3Z" fill="url(#g3)" stroke="#121212" stroke-opacity="0.75" stroke-width="1.6"/>
<path d="M729.8,788.3C729.7,790.2 727.7,793.0 726.4,794.3C725.2,795.6 723.9,796.2 722.4,796.2C720.9,796.1 718.6,795.8 717.7,793.8C716.8,791.8 716.5,786.1 717.0,784.0C717.5,781.9 719.0,781.4 720.7,781.2C722.4,781.0 725.7,781.7 727.2,782.9C728.7,784.0 729.9,786.4 729.8,788.3Z" fill="url(#g3)" stroke="#121212" stroke-opacity="0.75" stroke-width="1.6"/>
<path d="M1211.2,783.5C1212.4,785.2 1212.4,786.6 1211.4,788.1C1210.4,789.6 1207.4,792.2 1205.4,792.5C1203.4,792.9 1201.2,791.6 1199.4,790.3C1197.7,789.1 1194.8,787.1 1194.9,785.1C1195.0,783.1 1198.4,779.2 1200.0,778.1C1201.6,776.9 1202.8,777.3 1204.6,778.2C1206.5,779.1 1210.1,781.9 1211.2,783.5Z" fill="url(#g1)" stroke="#121212" stroke-opacity="0.75" stroke-width="1.6"/>
<path d="M913.0,781.0C911.8,783.8 907.4,786.6 904.4,787.1C901.4,787.6 897.2,785.9 895.1,784.1C893.1,782.2 892.2,778.7 891.9,775.9C891.7,773.2 891.7,769.0 893.6,767.7C895.4,766.4 900.0,767.7 903.0,768.2C906.0,768.6 909.9,768.2 911.6,770.4C913.3,772.5 914.2,778.2 913.0,781.0Z" fill="url(#g1)" stroke="#121212" stroke-opacity="0.75" stroke-width="1.6"/>
<path d="M873.3,779.8C872.6,781.5 871.9,782.8 869.1,783.8C866.4,784.8 861.0,786.4 856.8,785.8C852.6,785.2 846.4,782.3 843.9,780.2C841.4,778.0 840.1,774.6 841.6,772.8C843.2,771.0 847.9,769.2 853.2,769.4C858.5,769.5 870.0,772.0 873.4,773.7C876.8,775.4 874.0,778.1 873.3,779.8Z" fill="url(#g1)" stroke="#121212" stroke-opacity="0.75" stroke-width="1.6"/>
<path d="M674.5,794.9C674.6,795.8 671.7,796.1 669.1,796.8C666.6,797.5 661.8,799.0 659.1,799.1C656.3,799.2 653.2,798.3 652.5,797.3C651.7,796.2 653.5,793.8 654.5,792.6C655.5,791.4 656.1,790.4 658.5,790.3C660.9,790.1 666.1,790.7 668.8,791.5C671.5,792.3 674.5,794.1 674.5,794.9Z" fill="url(#g1)" stroke="#121212" stroke-opacity="0.75" stroke-width="1.6"/>
<path d="M1120.6,764.8C1120.3,766.9 1117.6,767.8 1114.1,768.3C1110.6,768.8 1103.2,769.0 1099.7,767.8C1096.2,766.7 1093.8,763.5 1093.2,761.5C1092.6,759.6 1093.9,757.7 1095.9,756.0C1097.8,754.3 1101.4,751.6 1104.7,751.5C1108.1,751.5 1113.2,753.4 1115.8,755.6C1118.5,757.8 1120.9,762.7 1120.6,764.8Z" fill="url(#g4)" stroke="#121212" stroke-opacity="0.75" stroke-width="1.6"/>
<path d="M504.9,746.8C505.7,748.8 507.1,751.7 505.1,753.9C503.0,756.0 496.5,758.9 492.7,759.7C488.9,760.5 484.8,759.6 482.3,758.7C479.7,757.8 476.2,756.5 477.2,754.2C478.1,752.0 484.0,747.4 487.8,745.3C491.7,743.3 497.4,741.9 500.3,742.1C503.1,742.4 504.1,744.8 504.9,746.8Z" fill="url(#g2)" stroke="#121212" stroke-opacity="0.75" stroke-width="1.6"/>
<path d="M112.8,785.6C112.7,787.0 109.8,787.7 107.2,788.9C104.6,790.2 100.7,792.8 97.1,793.2C93.4,793.6 87.0,792.8 85.1,791.4C83.3,790.0 84.8,786.4 86.2,784.8C87.6,783.2 90.0,782.3 93.6,781.6C97.2,780.9 104.4,779.9 107.6,780.6C110.8,781.2 112.9,784.2 112.8,785.6Z" fill="url(#g5)" stroke="#121212" stroke-opacity="0.75" stroke-width="1.6"/>
<path d="M616.0,788.3C615.9,790.3 611.5,793.3 609.0,794.3C606.5,795.3 604.2,795.3 601.0,794.3C597.7,793.4 591.8,790.2 589.5,788.5C587.2,786.8 585.8,785.1 587.2,784.0C588.6,782.8 594.4,781.9 598.1,781.6C601.9,781.4 606.6,781.2 609.6,782.3C612.6,783.4 616.1,786.2 616.0,788.3Z" fill="url(#g4)" stroke="#121212" stroke-opacity="0.75" stroke-width="1.6"/>
<path d="M551.5,776.7C551.7,779.0 551.5,783.4 550.6,785.1C549.7,786.9 547.7,787.3 546.1,787.0C544.5,786.7 541.8,785.2 541.0,783.3C540.2,781.4 540.8,777.5 541.3,775.4C541.9,773.3 542.8,771.4 544.1,770.7C545.5,770.0 548.2,770.3 549.5,771.3C550.7,772.3 551.4,774.4 551.5,776.7Z" fill="url(#g1)" stroke="#121212" stroke-opacity="0.75" stroke-width="1.6"/>
<path d="M936.5,803.2C936.6,805.5 935.4,809.2 932.8,811.5C930.1,813.7 923.8,816.5 920.4,816.7C917.1,816.9 914.4,814.0 912.7,812.6C911.1,811.1 909.8,810.0 910.7,808.0C911.7,805.9 914.8,802.1 918.4,800.4C921.9,798.7 929.1,797.5 932.1,797.9C935.2,798.4 936.4,800.9 936.5,803.2Z" fill="url(#g5)" stroke="#121212" stroke-opacity="0.75" stroke-width="1.6"/>
<path d="M540.3,774.7C539.4,776.4 534.9,777.2 531.7,777.4C528.5,777.5 524.6,777.3 521.2,775.8C517.9,774.4 512.3,770.3 511.7,768.5C511.2,766.6 515.7,765.6 517.9,764.9C520.0,764.2 521.4,763.7 524.6,764.1C527.8,764.5 534.5,765.4 537.1,767.1C539.8,768.9 541.2,773.0 540.3,774.7Z" fill="url(#g2)" stroke="#121212" stroke-opacity="0.75" stroke-width="1.6"/>
<path d="M1136.1,769.4C1136.1,771.5 1133.1,773.9 1130.1,774.7C1127.2,775.5 1122.0,775.3 1118.4,774.1C1114.9,772.9 1109.7,769.2 1108.7,767.3C1107.7,765.4 1110.2,763.9 1112.4,762.7C1114.6,761.5 1119.2,759.8 1122.1,759.8C1125.0,759.8 1127.4,760.8 1129.8,762.4C1132.1,764.0 1136.0,767.4 1136.1,769.4Z" fill="url(#g5)" stroke="#121212" stroke-opacity="0.75" stroke-width="1.6"/>
<path d="M334.6,787.2C334.8,788.5 332.5,790.5 331.0,791.6C329.5,792.6 327.5,793.5 325.6,793.6C323.8,793.7 320.9,793.4 319.8,792.2C318.6,790.9 318.4,787.5 318.8,786.0C319.2,784.6 320.4,783.8 322.2,783.4C323.9,783.1 327.4,783.4 329.4,784.0C331.5,784.6 334.3,786.0 334.6,787.2Z" fill="url(#g3)" stroke="#121212" stroke-opacity="0.75" stroke-width="1.6"/>
<path d="M754.0,770.1C753.8,772.2 751.7,775.9 749.8,777.0C747.8,778.2 744.1,777.9 742.3,777.1C740.5,776.3 739.6,773.7 738.9,772.1C738.1,770.4 736.9,768.7 737.8,767.0C738.7,765.4 742.2,762.5 744.3,762.1C746.5,761.7 749.3,763.3 750.9,764.6C752.5,766.0 754.2,768.1 754.0,770.1Z" fill="url(#g2)" stroke="#121212" stroke-opacity="0.75" stroke-width="1.6"/>
<path d="M606.0,778.1C605.7,779.3 601.4,781.3 598.2,781.7C595.0,782.0 590.9,781.0 586.9,780.3C582.9,779.5 576.4,778.2 574.3,777.1C572.1,776.0 572.7,774.2 574.2,773.5C575.7,772.8 579.1,772.9 583.4,773.1C587.6,773.2 596.0,773.3 599.8,774.1C603.6,775.0 606.2,776.8 606.0,778.1Z" fill="url(#g3)" stroke="#121212" stroke-opacity="0.75" stroke-width="1.6"/>
<path d="M782.7,791.8C783.1,793.4 780.8,796.8 778.3,798.5C775.7,800.2 770.9,801.9 767.3,802.2C763.6,802.5 758.8,801.5 756.5,800.3C754.2,799.1 752.2,797.0 753.4,795.1C754.5,793.2 759.8,789.9 763.5,788.8C767.3,787.8 772.5,788.4 775.7,788.9C778.9,789.4 782.2,790.2 782.7,791.8Z" fill="url(#g3)" stroke="#121212" stroke-opacity="0.75" stroke-width="1.6"/>
<path d="M1157.1,754.7C1157.2,756.5 1155.0,757.9 1153.8,759.3C1152.5,760.6 1151.7,762.8 1149.6,762.8C1147.6,762.8 1143.0,761.2 1141.4,759.5C1139.8,757.9 1139.0,754.5 1140.1,753.0C1141.1,751.4 1145.6,750.9 1147.9,750.2C1150.1,749.5 1151.9,748.1 1153.4,748.9C1154.9,749.6 1157.0,753.0 1157.1,754.7Z" fill="url(#g3)" stroke="#121212" stroke-opacity="0.75" stroke-width="1.6"/>
<path d="M552.4,764.2C553.0,766.7 550.0,770.7 547.8,772.7C545.7,774.6 542.3,775.4 539.8,775.7C537.3,775.9 534.4,776.4 532.8,774.3C531.2,772.2 529.9,765.8 530.3,763.2C530.8,760.5 533.2,759.2 535.5,758.3C537.9,757.4 541.3,756.9 544.2,757.9C547.0,758.9 551.8,761.7 552.4,764.2Z" fill="url(#g1)" stroke="#121212" stroke-opacity="0.75" stroke-width="1.6"/>
<path d="M365.2,780.7C364.8,782.8 362.3,786.7 360.3,787.5C358.2,788.2 355.5,786.4 352.8,785.3C350.2,784.2 345.5,782.5 344.5,780.8C343.4,779.1 344.7,776.8 346.5,775.1C348.3,773.4 352.5,770.8 355.2,770.7C357.9,770.7 360.9,773.3 362.6,775.0C364.3,776.7 365.6,778.6 365.2,780.7Z" fill="url(#g3)" stroke="#121212" stroke-opacity="0.75" stroke-width="1.6"/>
<path d="M558.4,756.7C557.9,757.8 554.4,759.6 551.7,760.1C549.0,760.5 544.8,759.8 542.2,759.5C539.6,759.1 537.3,758.9 536.1,757.8C534.9,756.8 534.0,754.4 535.1,753.3C536.2,752.2 539.4,751.3 542.6,751.3C545.9,751.3 551.8,752.5 554.4,753.4C557.0,754.3 558.8,755.6 558.4,756.7Z" fill="url(#g1)" stroke="#121212" stroke-opacity="0.75" stroke-width="1.6"/>
<path d="M706.8,760.3C706.7,762.1 701.9,764.7 699.1,765.9C696.3,767.1 693.1,767.8 690.2,767.5C687.4,767.3 684.0,766.0 682.2,764.4C680.4,762.8 678.6,759.6 679.5,758.1C680.4,756.5 684.3,755.4 687.6,754.9C690.9,754.4 696.2,754.3 699.4,755.2C702.6,756.1 706.8,758.5 706.8,760.3Z" fill="url(#g3)" stroke="#121212" stroke-opacity="0.75" stroke-width="1.6"/>
<path d="M946.2,774.8C946.4,778.0 943.3,784.1 940.7,786.9C938.2,789.6 934.3,791.3 931.0,791.2C927.6,791.0 922.8,788.4 920.6,786.1C918.4,783.7 916.4,779.8 917.8,776.9C919.2,774.1 925.2,770.5 928.8,768.9C932.5,767.3 936.7,766.6 939.6,767.6C942.5,768.5 946.0,771.6 946.2,774.8Z" fill="url(#g3)" stroke="#121212" stroke-opacity="0.75" stroke-width="1.6"/>
<path d="M1069.1,771.1C1068.9,772.1 1066.6,773.1 1064.5,773.4C1062.4,773.7 1059.4,773.5 1056.5,772.9C1053.7,772.2 1049.1,770.8 1047.2,769.5C1045.3,768.1 1043.6,765.5 1045.0,764.7C1046.4,763.8 1052.1,763.9 1055.6,764.3C1059.0,764.8 1063.6,766.1 1065.8,767.2C1068.1,768.3 1069.4,770.0 1069.1,771.1Z" fill="url(#g5)" stroke="#121212" stroke-opacity="0.75" stroke-width="1.6"/>
<path d="M894.3,771.2C894.0,771.9 890.8,772.3 887.5,771.9C884.2,771.6 879.0,770.5 874.4,769.1C869.9,767.7 862.4,764.8 860.4,763.5C858.4,762.3 859.9,761.8 862.2,761.6C864.6,761.5 870.2,761.7 874.7,762.7C879.2,763.6 886.0,765.9 889.3,767.4C892.6,768.8 894.6,770.4 894.3,771.2Z" fill="url(#g2)" stroke="#121212" stroke-opacity="0.75" stroke-width="1.6"/>
<path d="M1137.9,773.6C1137.9,776.0 1135.6,779.2 1133.6,781.2C1131.6,783.1 1129.1,786.1 1126.1,785.4C1123.2,784.7 1117.2,780.2 1115.7,776.9C1114.3,773.6 1116.3,768.1 1117.6,765.8C1118.8,763.6 1120.6,763.3 1123.2,763.5C1125.9,763.7 1131.2,765.3 1133.6,767.0C1136.1,768.7 1137.9,771.3 1137.9,773.6Z" fill="url(#g4)" stroke="#121212" stroke-opacity="0.75" stroke-width="1.6"/>
<path d="M1075.3,798.9C1075.0,800.4 1073.4,801.6 1071.9,802.4C1070.3,803.3 1067.9,804.5 1066.1,803.8C1064.2,803.1 1061.0,799.7 1060.6,798.1C1060.1,796.6 1062.3,795.7 1063.3,794.5C1064.2,793.4 1064.6,791.6 1066.3,791.5C1068.0,791.4 1071.9,792.6 1073.4,793.8C1074.9,795.1 1075.5,797.5 1075.3,798.9Z" fill="url(#g1)" stroke="#121212" stroke-opacity="0.75" stroke-width="1.6"/>
<path d="M140.7,760.9C140.0,763.3 135.7,766.0 132.1,766.6C128.5,767.2 122.5,765.8 119.0,764.4C115.6,763.0 112.4,760.9 111.5,758.1C110.6,755.3 111.6,749.3 113.7,747.5C115.8,745.8 120.1,746.9 124.0,747.7C127.8,748.4 133.8,749.8 136.6,752.0C139.4,754.2 141.5,758.4 140.7,760.9Z" fill="url(#g4)" stroke="#121212" stroke-opacity="0.75" stroke-width="1.6"/>
<path d="M132.9,784.5C132.5,785.5 131.0,787.2 128.9,787.4C126.7,787.7 123.1,787.0 120.0,786.0C116.8,785.0 111.8,782.7 110.1,781.4C108.5,780.0 108.6,778.6 110.2,777.9C111.9,777.2 116.5,776.8 120.0,777.4C123.6,778.0 129.3,780.2 131.4,781.4C133.6,782.5 133.3,783.5 132.9,784.5Z" fill="url(#g2)" stroke="#121212" stroke-opacity="0.75" stroke-width="1.6"/>
<path d="M1073.0,798.0C1073.5,799.9 1072.3,803.5 1070.3,804.9C1068.4,806.3 1064.6,806.9 1061.6,806.5C1058.6,806.0 1053.8,804.0 1052.5,802.2C1051.2,800.4 1052.3,797.2 1053.8,795.5C1055.2,793.9 1059.0,792.4 1061.3,792.1C1063.5,791.8 1065.4,792.6 1067.4,793.6C1069.3,794.6 1072.5,796.1 1073.0,798.0Z" fill="url(#g4)" stroke="#121212" stroke-opacity="0.75" stroke-width="1.6"/>
<path d="M840.7,791.9C840.7,793.6 833.9,795.3 830.5,796.6C827.1,797.9 824.6,799.4 820.4,799.6C816.2,799.9 807.7,799.5 805.4,798.2C803.1,796.8 805.0,793.5 806.6,791.6C808.2,789.7 811.1,787.6 815.0,786.7C819.0,785.8 826.1,785.4 830.4,786.2C834.7,787.1 840.7,790.1 840.7,791.9Z" fill="url(#g3)" stroke="#121212" stroke-opacity="0.75" stroke-width="1.6"/>
<path d="M1185.0,791.2C1184.6,792.5 1181.2,793.6 1177.6,793.5C1174.0,793.4 1167.1,792.1 1163.4,790.6C1159.7,789.1 1157.2,786.4 1155.5,784.4C1153.9,782.5 1151.9,779.7 1153.4,778.8C1154.9,778.0 1160.3,778.3 1164.7,779.4C1169.1,780.5 1176.6,783.7 1180.0,785.7C1183.4,787.6 1185.4,789.9 1185.0,791.2Z" fill="url(#g2)" stroke="#121212" stroke-opacity="0.75" stroke-width="1.6"/>
<path d="M1061.3,769.7C1060.9,772.1 1057.3,774.5 1055.1,775.8C1052.9,777.1 1050.1,777.4 1048.0,777.4C1046.0,777.5 1043.9,777.4 1042.8,775.9C1041.8,774.4 1040.7,771.2 1041.6,768.5C1042.5,765.8 1045.5,761.0 1048.2,759.8C1051.0,758.7 1055.6,759.9 1057.8,761.6C1060.0,763.2 1061.8,767.3 1061.3,769.7Z" fill="url(#g2)" stroke="#121212" stroke-opacity="0.75" stroke-width="1.6"/>
<path d="M780.4,810.2C780.0,811.5 780.7,813.6 778.7,814.0C776.7,814.4 771.9,813.5 768.6,812.9C765.3,812.2 760.1,811.7 758.9,810.3C757.8,809.0 760.2,806.0 761.7,804.9C763.2,803.8 764.8,803.7 768.0,803.9C771.2,804.2 778.8,805.3 780.9,806.3C783.0,807.4 780.7,809.0 780.4,810.2Z" fill="url(#g2)" stroke="#121212" stroke-opacity="0.75" stroke-width="1.6"/>
<path d="M1175.8,797.9C1176.2,799.1 1171.0,801.9 1168.5,803.4C1165.9,804.9 1163.4,806.6 1160.4,806.9C1157.5,807.2 1152.7,806.2 1150.6,805.2C1148.6,804.1 1147.6,801.9 1148.1,800.5C1148.6,799.2 1150.5,797.7 1153.5,797.0C1156.5,796.2 1162.5,795.6 1166.2,795.8C1169.9,795.9 1175.5,796.6 1175.8,797.9Z" fill="url(#g3)" stroke="#121212" stroke-opacity="0.75" stroke-width="1.6"/>
<path d="M291.8,808.9C291.4,811.6 291.0,814.2 288.5,816.2C286.1,818.3 280.4,821.7 277.0,821.1C273.7,820.4 269.4,815.3 268.3,812.2C267.3,809.1 269.7,804.9 270.9,802.5C272.2,800.0 272.6,798.1 275.8,797.7C279.1,797.4 287.8,798.5 290.5,800.3C293.1,802.2 292.1,806.3 291.8,808.9Z" fill="url(#g2)" stroke="#121212" stroke-opacity="0.75" stroke-width="1.6"/>
<path d="M619.9,795.0C619.4,798.3 616.1,803.3 613.6,804.8C611.1,806.3 607.3,805.7 604.8,804.2C602.4,802.7 599.5,799.3 598.9,795.9C598.3,792.4 599.9,786.2 601.4,783.6C602.9,781.0 605.3,779.9 607.8,780.2C610.3,780.5 614.4,782.8 616.5,785.3C618.5,787.7 620.4,791.7 619.9,795.0Z" fill="url(#g1)" stroke="#121212" stroke-opacity="0.75" stroke-width="1.6"/>
<path d="M139.5,798.9C140.6,800.6 139.7,803.8 136.8,806.3C133.9,808.7 125.9,812.8 122.0,813.7C118.1,814.7 115.6,813.6 113.3,812.0C111.1,810.4 108.0,806.9 108.6,804.3C109.1,801.7 113.1,798.0 116.6,796.6C120.2,795.2 126.0,795.5 129.8,795.8C133.6,796.2 138.3,797.2 139.5,798.9Z" fill="url(#g3)" stroke="#121212" stroke-opacity="0.75" stroke-width="1.6"/>
<path d="M983.1,760.0C983.6,761.9 981.5,764.4 980.1,766.3C978.6,768.3 976.3,771.8 974.3,771.8C972.3,771.8 969.2,768.3 968.0,766.3C966.9,764.2 966.7,761.4 967.1,759.6C967.6,757.7 969.0,755.9 970.6,755.1C972.2,754.3 974.7,753.8 976.8,754.7C978.8,755.5 982.5,758.0 983.1,760.0Z" fill="url(#g1)" stroke="#121212" stroke-opacity="0.75" stroke-width="1.6"/>
<path d="M755.6,787.1C755.8,788.5 757.6,790.7 755.5,792.4C753.4,794.2 746.9,796.8 743.0,797.7C739.2,798.7 735.1,798.5 732.5,798.1C729.8,797.7 726.1,797.3 727.0,795.5C727.9,793.7 733.3,789.5 737.8,787.5C742.3,785.6 751.2,783.9 754.2,783.8C757.1,783.7 755.4,785.6 755.6,787.1Z" fill="url(#g1)" stroke="#121212" stroke-opacity="0.75" stroke-width="1.6"/>
<path d="M467.4,779.9C468.1,783.3 465.8,787.0 464.0,788.5C462.1,790.1 458.7,789.4 456.4,789.3C454.1,789.3 451.4,790.0 450.3,788.0C449.1,786.0 449.1,780.3 449.7,777.4C450.3,774.4 452.3,772.0 454.0,770.5C455.8,768.9 458.0,766.4 460.2,768.0C462.5,769.6 466.8,776.5 467.4,779.9Z" fill="url(#g4)" stroke="#121212" stroke-opacity="0.75" stroke-width="1.6"/>
<path d="M223.1,800.3C222.6,802.3 220.9,804.4 219.3,805.8C217.7,807.3 215.4,809.2 213.5,808.8C211.5,808.5 208.9,805.8 207.7,803.7C206.5,801.6 205.6,798.3 206.4,796.2C207.2,794.2 209.9,791.6 212.5,791.3C215.1,790.9 220.3,792.4 222.0,793.9C223.8,795.4 223.5,798.3 223.1,800.3Z" fill="url(#g5)" stroke="#121212" stroke-opacity="0.75" stroke-width="1.6"/>
<path d="M608.8,747.3C609.1,748.8 608.4,751.8 606.9,753.2C605.4,754.6 602.0,755.5 599.8,755.7C597.6,755.9 595.0,755.4 593.8,754.2C592.5,753.1 591.5,750.2 592.4,748.8C593.3,747.4 596.8,746.6 599.0,745.9C601.2,745.1 603.8,744.0 605.5,744.2C607.1,744.4 608.6,745.8 608.8,747.3Z" fill="url(#g2)" stroke="#121212" stroke-opacity="0.75" stroke-width="1.6"/>
<path d="M1046.7,770.2C1046.3,771.7 1044.0,773.3 1042.1,774.4C1040.2,775.5 1037.8,776.5 1035.3,776.7C1032.8,777.0 1028.3,776.8 1027.2,775.6C1026.1,774.4 1027.4,771.2 1028.9,769.7C1030.3,768.2 1033.0,767.3 1035.7,766.6C1038.3,765.9 1042.9,765.0 1044.8,765.6C1046.6,766.2 1047.2,768.8 1046.7,770.2Z" fill="url(#g1)" stroke="#121212" stroke-opacity="0.75" stroke-width="1.6"/>
<path d="M779.0,746.2C779.3,748.7 778.8,753.4 777.8,755.6C776.8,757.9 774.7,759.9 773.0,759.7C771.4,759.5 768.9,757.0 767.8,754.4C766.6,751.8 766.1,746.7 766.3,744.1C766.6,741.5 767.8,739.4 769.3,738.8C770.9,738.3 774.1,739.6 775.7,740.8C777.3,742.0 778.6,743.7 779.0,746.2Z" fill="url(#g2)" stroke="#121212" stroke-opacity="0.75" stroke-width="1.6"/>
<path d="M607.9,797.0C607.5,798.7 605.6,801.7 602.4,802.2C599.3,802.7 592.1,801.1 588.9,799.8C585.7,798.5 583.9,796.0 583.5,794.6C583.1,793.1 584.6,792.2 586.7,791.2C588.7,790.2 592.8,788.6 595.8,788.7C598.9,788.9 603.0,790.6 605.0,792.0C607.0,793.4 608.3,795.3 607.9,797.0Z" fill="url(#g5)" stroke="#121212" stroke-opacity="0.75" stroke-width="1.6"/>
<path d="M919.4,788.7C919.6,789.8 917.8,791.2 916.6,792.1C915.4,792.9 913.5,793.8 911.9,793.9C910.4,794.0 908.2,793.7 907.5,792.7C906.7,791.7 907.1,789.0 907.5,787.7C907.8,786.4 908.3,785.2 909.6,784.8C910.9,784.4 913.7,784.6 915.3,785.3C917.0,785.9 919.2,787.5 919.4,788.7Z" fill="url(#g1)" stroke="#121212" stroke-opacity="0.75" stroke-width="1.6"/>
<path d="M817.4,779.4C818.3,782.2 810.9,787.0 808.0,789.6C805.2,792.2 804.2,794.3 800.4,795.2C796.6,796.1 788.7,797.3 785.3,795.1C781.9,792.8 779.2,784.9 780.1,781.5C781.1,778.2 787.4,776.4 791.2,774.9C795.0,773.4 798.5,771.9 802.9,772.7C807.3,773.4 816.6,776.6 817.4,779.4Z" fill="url(#g3)" stroke="#121212" stroke-opacity="0.75" stroke-width="1.6"/>
<path d="M459.6,771.8C460.3,773.8 457.5,777.4 454.8,779.1C452.1,780.9 446.8,782.2 443.7,782.2C440.5,782.2 437.4,780.8 435.8,779.4C434.1,777.9 432.3,775.8 433.5,773.6C434.8,771.5 440.5,767.5 443.3,766.5C446.2,765.4 447.8,766.2 450.6,767.0C453.3,767.9 458.9,769.8 459.6,771.8Z" fill="url(#g1)" stroke="#121212" stroke-opacity="0.75" stroke-width="1.6"/>
<path d="M361.4,755.4C361.7,757.6 359.9,760.8 358.5,762.7C357.1,764.6 355.5,766.5 353.2,766.7C350.9,766.9 346.0,765.7 344.6,764.0C343.1,762.3 344.2,758.5 344.7,756.4C345.2,754.3 345.4,752.4 347.5,751.2C349.5,750.0 354.6,748.6 356.9,749.3C359.2,750.0 361.1,753.2 361.4,755.4Z" fill="url(#g1)" stroke="#121212" stroke-opacity="0.75" stroke-width="1.6"/>
<path d="M286.0,784.9C285.5,786.3 282.4,788.3 279.3,789.5C276.1,790.6 270.1,792.1 267.0,791.9C264.0,791.7 262.0,789.7 260.9,788.2C259.8,786.8 258.8,784.4 260.3,783.1C261.8,781.7 266.2,780.6 269.9,780.3C273.5,779.9 279.6,780.3 282.3,781.0C285.0,781.8 286.5,783.5 286.0,784.9Z" fill="url(#g1)" stroke="#121212" stroke-opacity="0.75" stroke-width="1.6"/>
<path d="M800.9,809.1C801.3,811.1 795.6,814.9 792.5,815.9C789.5,817.0 786.0,816.2 782.7,815.4C779.5,814.6 775.1,812.4 773.0,811.1C770.9,809.7 768.5,809.0 770.3,807.5C772.1,805.9 780.5,802.2 783.8,801.6C787.2,800.9 787.6,802.2 790.4,803.5C793.3,804.7 800.6,807.0 800.9,809.1Z" fill="url(#g2)" stroke="#121212" stroke-opacity="0.75" stroke-width="1.6"/>
<path d="M187.9,773.9C187.6,775.6 186.2,775.9 184.4,776.1C182.7,776.4 179.9,776.6 177.6,775.7C175.4,774.7 171.8,772.7 170.9,770.7C170.0,768.7 170.7,764.9 172.2,763.5C173.7,762.2 177.7,762.0 180.1,762.5C182.4,762.9 185.1,764.4 186.4,766.3C187.8,768.3 188.3,772.3 187.9,773.9Z" fill="url(#g2)" stroke="#121212" stroke-opacity="0.75" stroke-width="1.6"/>
<path d="M949.2,768.9C949.6,770.5 948.1,773.4 946.6,774.6C945.2,775.8 942.4,776.3 940.5,776.0C938.5,775.7 936.0,774.4 934.8,772.9C933.6,771.4 932.8,768.3 933.4,766.8C934.0,765.4 936.5,764.2 938.4,764.0C940.2,763.8 942.6,764.7 944.4,765.5C946.2,766.3 948.9,767.4 949.2,768.9Z" fill="url(#g5)" stroke="#121212" stroke-opacity="0.75" stroke-width="1.6"/>
<path d="M857.7,756.4C857.4,758.4 853.5,759.2 850.8,760.0C848.1,760.7 845.3,761.8 841.2,760.8C837.2,759.8 828.5,756.3 826.3,754.1C824.1,751.9 825.7,749.0 828.2,747.7C830.7,746.3 837.2,745.9 841.3,745.9C845.4,745.9 850.0,746.0 852.7,747.7C855.5,749.5 858.0,754.3 857.7,756.4Z" fill="url(#g5)" stroke="#121212" stroke-opacity="0.75" stroke-width="1.6"/>
<path d="M548.0,799.0C548.5,800.4 546.9,802.4 544.6,803.9C542.4,805.5 537.1,808.0 534.5,808.2C532.0,808.4 530.8,806.4 529.6,805.2C528.4,804.0 526.3,803.0 527.4,801.1C528.5,799.2 533.6,794.8 535.9,793.8C538.3,792.8 539.5,794.2 541.5,795.0C543.5,795.9 547.5,797.5 548.0,799.0Z" fill="url(#g5)" stroke="#121212" stroke-opacity="0.75" stroke-width="1.6"/>
<path d="M684.9,772.9C685.7,775.5 684.6,778.9 682.9,781.2C681.2,783.5 677.9,786.5 674.8,786.8C671.7,787.1 666.4,785.0 664.4,783.1C662.4,781.1 662.6,778.2 662.7,775.3C662.8,772.4 662.3,767.2 664.8,765.6C667.3,764.0 674.6,764.3 678.0,765.5C681.3,766.7 684.1,770.3 684.9,772.9Z" fill="url(#g2)" stroke="#121212" stroke-opacity="0.75" stroke-width="1.6"/>
<path d="M147.3,807.9C147.5,809.7 147.5,812.1 146.4,813.6C145.3,815.1 142.3,816.9 140.8,817.0C139.3,817.0 138.3,815.6 137.4,814.0C136.5,812.4 135.1,809.5 135.5,807.4C135.8,805.3 137.9,802.3 139.6,801.6C141.3,800.8 144.1,801.7 145.4,802.8C146.7,803.8 147.1,806.1 147.3,807.9Z" fill="url(#g5)" stroke="#121212" stroke-opacity="0.75" stroke-width="1.6"/>
<path d="M521.3,791.2C521.6,793.4 520.1,794.4 518.6,796.2C517.1,797.9 514.9,801.7 512.3,801.9C509.7,802.1 504.7,799.3 503.2,797.2C501.7,795.1 502.7,791.6 503.5,789.3C504.3,787.0 506.0,784.4 508.2,783.4C510.4,782.4 514.5,782.1 516.7,783.4C518.9,784.7 521.0,789.1 521.3,791.2Z" fill="url(#g5)" stroke="#121212" stroke-opacity="0.75" stroke-width="1.6"/>
<path d="M18.8,773.7C18.5,775.4 15.1,776.9 13.3,777.9C11.5,778.8 9.4,780.5 8.0,779.5C6.6,778.6 5.3,774.0 4.8,772.1C4.4,770.2 4.3,769.6 5.3,768.3C6.2,767.0 8.8,764.3 10.5,764.1C12.2,764.0 14.0,766.0 15.4,767.6C16.8,769.2 19.2,772.0 18.8,773.7Z" fill="url(#g5)" stroke="#121212" stroke-opacity="0.75" stroke-width="1.6"/>
<path d="M1163.6,760.9C1162.9,762.4 1159.0,762.4 1155.7,762.5C1152.4,762.7 1147.7,763.1 1143.9,761.8C1140.2,760.5 1134.9,756.8 1133.4,754.7C1131.9,752.7 1133.3,750.4 1134.9,749.4C1136.6,748.3 1139.3,747.9 1143.5,748.6C1147.6,749.3 1156.4,751.4 1159.7,753.4C1163.1,755.5 1164.2,759.4 1163.6,760.9Z" fill="url(#g2)" stroke="#121212" stroke-opacity="0.75" stroke-width="1.6"/>
<path d="M1005.8,764.4C1005.4,767.2 1002.8,770.8 998.9,771.8C995.0,772.8 986.6,771.6 982.6,770.3C978.6,769.1 975.6,767.0 974.8,764.4C973.9,761.9 974.8,757.3 977.5,754.8C980.1,752.3 986.8,749.3 990.7,749.3C994.7,749.3 998.8,752.5 1001.3,755.0C1003.8,757.5 1006.2,761.5 1005.8,764.4Z" fill="url(#g2)" stroke="#121212" stroke-opacity="0.75" stroke-width="1.6"/>
<path d="M675.9,799.5C676.2,801.5 672.9,802.9 669.9,805.0C666.9,807.2 661.8,811.4 657.8,812.4C653.9,813.3 648.1,811.9 646.1,810.7C644.1,809.4 644.8,807.1 645.9,805.0C647.0,802.9 648.9,800.1 652.6,798.1C656.3,796.1 664.3,792.7 668.2,792.9C672.0,793.2 675.6,797.5 675.9,799.5Z" fill="url(#g1)" stroke="#121212" stroke-opacity="0.75" stroke-width="1.6"/>
<path d="M150,760 C200,748 260,752 275,770 C282,790 270,805 150,805 Z" fill="url(#g1)"/>
<rect x="690" y="748" width="140" height="36" rx="18" fill="#101010" filter="url(#b4)"/>
<ellipse cx="765" cy="788" rx="22" ry="12" fill="url(#g5)" stroke="#111" stroke-width="1.5"/>
<ellipse cx="855" cy="785" rx="26" ry="14" fill="url(#g5)" stroke="#111" stroke-width="1.5"/>
<ellipse cx="960" cy="790" rx="20" ry="11" fill="url(#g1)" stroke="#111" stroke-width="1.5"/>
<ellipse cx="1122" cy="782" rx="16" ry="10" fill="url(#g5)" stroke="#111" stroke-width="1.5"/>
<ellipse cx="12" cy="765" rx="14" ry="8" fill="url(#g5)" stroke="#111" stroke-width="1.5"/>
<ellipse cx="1165" cy="680" rx="16" ry="8" fill="url(#g5)" stroke="#111" stroke-width="1.5" transform="rotate(20 1165 680)"/>
<g mask="url(#texmask)"><rect x="0" y="380" width="1200" height="180" filter="url(#tex)" opacity="0.85"/><rect x="0" y="380" width="1200" height="180" filter="url(#tex2)" opacity="0.55"/></g><rect x="0" y="560" width="1200" height="240" filter="url(#tex)" opacity="0.55"/><rect x="0" y="560" width="1200" height="240" filter="url(#tex2)" opacity="0.35"/>
</svg>

<div class="win"><div class="pg">
  <div class="hdr"></div>
  <div class="t s" style="left:72.3px;top:74.2px;font-size:16px;letter-spacing:0.35px;line-height:20px;z-index:4;-webkit-text-stroke:0.2px #5f6368">Settings</div>
  <div style="position:absolute;left:450px;top:64px;width:479px;height:40px;border-radius:20px;background:#f2f2f2;z-index:4"></div>
  <div class="t s" style="left:513px;top:76px;z-index:5">Search settings</div>
  <svg class="i" width="1200" height="120" style="z-index:5">
    <circle cx="480.2" cy="82.3" r="4.6" fill="none" stroke="#202124" stroke-width="1.9"/>
    <line x1="483.6" y1="85.7" x2="487.6" y2="89.7" stroke="#202124" stroke-width="2" stroke-linecap="round"/>
    <line x1="1064" y1="36.8" x2="1076" y2="36.8" stroke="#3c4043" stroke-width="1.5"/>
    <rect x="1097.5" y="27" width="9.5" height="9.8" fill="none" stroke="#3c4043" stroke-width="1.5"/>
    <path d="M1129.5,27.5 L1138.8,36.8 M1138.8,27.5 L1129.5,36.8" stroke="#3c4043" stroke-width="1.5"/>
  </svg>

  <!-- sidebar -->
  <div style="position:absolute;left:50px;top:470px;width:248px;height:42px;border-radius:0 21px 21px 0;background:#e8f0fe"></div>
  <svg class="i" width="320" height="560">
    <!-- wifi -->
    <path d="M72.2,138.3 Q80,131.6 87.9,138.3 L80,147.9 Z" fill="#202124"/>
    <path d="M74.6,140.2 Q80,135.8 85.5,140.2" fill="none" stroke="#fff" stroke-width="1"/>
    <!-- bluetooth -->
    <g transform="translate(70.1,180.3) scale(0.8625)"><path d="M17.71 7.71L12 2h-1v7.59L6.41 5 5 6.41 10.59 12 5 17.59 6.41 19 11 14.41V22h1l5.71-5.71-4.3-4.29 4.3-4.29zM13 5.83l1.88 1.88L13 9.59V5.83zm1.88 10.46L13 18.17v-3.76l1.88 1.88z" fill="#202124" stroke="#202124" stroke-width="0.7"/></g>
    <!-- phone -->
    <rect x="74" y="232" width="12.3" height="18" rx="1.6" fill="#202124"/>
    <rect x="76" y="235.8" width="8.3" height="10.3" fill="#fff"/>
    <!-- account -->
    <circle cx="80" cy="287.5" r="3.3" fill="#202124"/>
    <path d="M73.3,297.8 V296 C73.3,293.6 77.5,292.6 80,292.6 C82.5,292.6 86.8,293.6 86.8,296 V297.8 Z" fill="#202124"/>
    <!-- laptop -->
    <rect x="72.8" y="333.8" width="14.4" height="10.6" fill="none" stroke="#202124" stroke-width="1.6"/>
    <rect x="70" y="345.3" width="20" height="2.5" rx="1.2" fill="#202124"/>
    <!-- pencil -->
    <path d="M84,381.5 L87,384.5 L79.3,392.3 L76.3,389.3 Z" fill="none" stroke="#202124" stroke-width="1.5" stroke-linejoin="round"/>
    <path d="M75.2,391.5 C76.8,392.8 77,394.6 75.6,395.8 C74.4,396.8 72.4,396.8 70.9,396.6 C72,395.8 72,394.6 72.4,393.4 C72.8,392 74,391 75.2,391.5 Z" fill="#202124"/>
    <!-- search -->
    <circle cx="77.8" cy="438.7" r="4.3" fill="none" stroke="#202124" stroke-width="1.7"/>
    <line x1="81" y1="441.9" x2="86" y2="446.9" stroke="#202124" stroke-width="1.9" stroke-linecap="round"/>
    <!-- shield -->
    <defs><clipPath id="shc"><path d="M80,484.3 L85.9,486.7 V491 C85.9,494.4 83.6,497.4 80,498.1 C76.4,497.4 74.1,494.4 74.1,491 V486.7 Z"/></clipPath></defs>
    <path d="M80,482.3 L87.7,485.5 V491 C87.7,495.5 84.5,499 80,499.9 C75.5,499 72.3,495.5 72.3,491 V485.5 Z" fill="#1a5fc8"/>
    <g clip-path="url(#shc)"><rect x="72" y="482" width="8" height="9" fill="#fff"/><rect x="80" y="491" width="8" height="9" fill="#fff"/></g>
    <!-- apps -->
    <g fill="#202124">
      <circle cx="74.9" cy="535.8" r="1.95"/><circle cx="79.9" cy="535.8" r="1.95"/><circle cx="84.9" cy="535.8" r="1.95"/>
      <circle cx="74.9" cy="540.85" r="1.95"/><circle cx="79.9" cy="540.85" r="1.95"/><circle cx="84.9" cy="540.85" r="1.95"/>
      <circle cx="74.9" cy="545.9" r="1.95"/><circle cx="79.9" cy="545.9" r="1.95"/><circle cx="84.9" cy="545.9" r="1.95"/>
    </g>
    <path d="M270,586.2 L278.6,586.2 L274.3,590.5 Z" fill="#202124"/>
  </svg>
  <div class="t nav" style="left:106px;top:133.4px">Network</div>
  <div class="t nav" style="left:106px;top:183.4px">Bluetooth</div>
  <div class="t nav" style="left:106px;top:233.4px">Connected devices</div>
  <div class="t nav" style="left:106px;top:283.4px">Accounts</div>
  <div class="t nav" style="left:106px;top:333.4px">Device</div>
  <div class="t nav" style="left:106px;top:383.4px">Personalization</div>
  <div class="t nav" style="left:106px;top:433.4px">Search and Assistant</div>
  <div class="t nav" style="left:106px;top:483.6px;color:#2160c4;-webkit-text-stroke-color:#2160c4">Security and Privacy</div>
  <div class="t nav" style="left:106px;top:533.4px">Apps</div>
  <div class="t nav" style="left:70px;top:580.5px">Advanced</div>
  <div style="position:absolute;left:50px;top:613px;width:252px;height:1px;background:#e6e6e6"></div>
  <div class="t nav" style="left:70px;top:636.4px">About ChromeOS</div>

  <!-- main -->
  <div class="t" style="left:349.5px;top:141.3px;font-size:14.2px;line-height:18px">Security and Privacy</div>
  <div class="card"></div>
  <div class="dv" style="top:241px"></div>
  <div class="dv" style="top:289px"></div>
  <div class="dv" style="top:354px"></div>
  <div class="dv" style="top:437.5px"></div>
  <div class="dv" style="top:488.5px"></div>

  <div class="t" style="left:369.5px;top:191.6px">Lock screen and sign-in</div>
  <div class="t s" style="left:369.5px;top:211.3px">PIN or password</div>
  <div class="t" style="left:369.5px;top:258px">Manage other people</div>
  <div class="t" style="left:369.5px;top:304.6px">Help improve ChromeOS features and performance</div>
  <div class="t s" style="left:369.5px;top:324.6px">Automatically sends crash reports as well as diagnostic and usage data to Google</div>
  <div class="t" style="left:369.5px;top:369.6px">Suggest new content to explore</div>
  <div class="t s" style="left:369.5px;top:389.5px">Includes apps, webpages, and more. Sends statistics to improve suggestions only if you’ve chosen to</div>
  <div class="t s" style="left:369.5px;top:409px">share usage data. <span style="color:#2b6acb;margin-left:1.6px">Learn more</span></div>
  <div class="t" style="left:369.5px;top:456.5px">Enable Verified Access</div>
  <div class="t" style="left:369.5px;top:504px">Use secure DNS</div>
  <div class="t s" style="left:369.5px;top:524px">Determines how to connect to websites over a secure connection</div>
  <div class="t" style="left:445.5px;top:562.4px">With your current service provider</div>
  <div class="t s" style="left:445.5px;top:582.2px;letter-spacing:-0.13px">Secure DNS may not be available all the time</div>
  <div class="t" style="left:445.5px;top:622.5px">With</div>

  <svg class="i" width="1100" height="720">
    <!-- arrows -->
    <path d="M997.8,204.6 L1001.9,208.8 L997.8,213 Z" fill="#5f6368"/>
    <path d="M997.8,261.3 L1001.9,265.5 L997.8,269.7 Z" fill="#5f6368"/>
    <!-- toggles -->
    <g>
      <rect x="979" y="316" width="28" height="12" rx="6" fill="#a8c7fa"/><circle cx="1001.3" cy="322" r="8" fill="#1a73e8"/>
      <rect x="979" y="391" width="28" height="12" rx="6" fill="#a8c7fa"/><circle cx="1001.3" cy="397" r="8" fill="#1a73e8"/>
      <rect x="979" y="457.7" width="28" height="12" rx="6" fill="#a8c7fa"/><circle cx="1001.3" cy="463.7" r="8" fill="#1a73e8"/>
      <rect x="979" y="515.8" width="28" height="12" rx="6" fill="#a8c7fa"/><circle cx="1001.3" cy="521.8" r="8" fill="#1a73e8"/>
    </g>
    <!-- radios -->
    <circle cx="417.3" cy="570.2" r="6.8" fill="none" stroke="#5f6368" stroke-width="2"/>
    <circle cx="417.3" cy="630.3" r="6.8" fill="none" stroke="#1a73e8" stroke-width="2"/>
    <circle cx="417.3" cy="630.3" r="3.6" fill="#1a73e8"/>
  </svg>

  <!-- select -->
  <div style="position:absolute;left:477px;top:613px;width:202.4px;height:34px;border:1px solid #a9bfe2;border-radius:4px;background:#f3f3f3"></div>
  <div class="t" style="left:486.5px;top:622px">Custom</div>
  <svg class="i" width="700" height="700"><path d="M660.3,627.4 L670.4,627.4 L665.35,632 Z" fill="#5f6368"/></svg>
  <!-- input -->
  <div style="position:absolute;left:478.4px;top:652.4px;width:385.1px;height:30.8px;border-radius:2px;background:#f3f3f3"></div>

  <!-- popup -->
  <div style="position:absolute;left:478.5px;top:453.2px;width:199.3px;height:160.3px;background:#fff;border:1px solid #9a9a9a;border-bottom:none;box-shadow:0 4px 4px rgba(0,0,0,.38)"></div>
  <div style="position:absolute;left:479.5px;top:581.3px;width:197.5px;height:32.2px;background:#c9def6"></div>
  <div class="t" style="left:486.8px;top:461.8px">Custom</div>
  <div class="t" style="left:486.8px;top:493.5px">OpenDNS</div>
  <div class="t" style="left:486.8px;top:525.2px">Google (Public DNS)</div>
  <div class="t" style="left:486.8px;top:558.3px">CleanBrowsing (Family Filter)</div>
  <div class="t" style="left:486.8px;top:589.3px">Cloudflare (1.1.1.1)</div>

  <div class="t" style="left:351px;top:742.5px;font-size:14.2px;line-height:18px">Apps</div>
</div></div>
</body></html>
